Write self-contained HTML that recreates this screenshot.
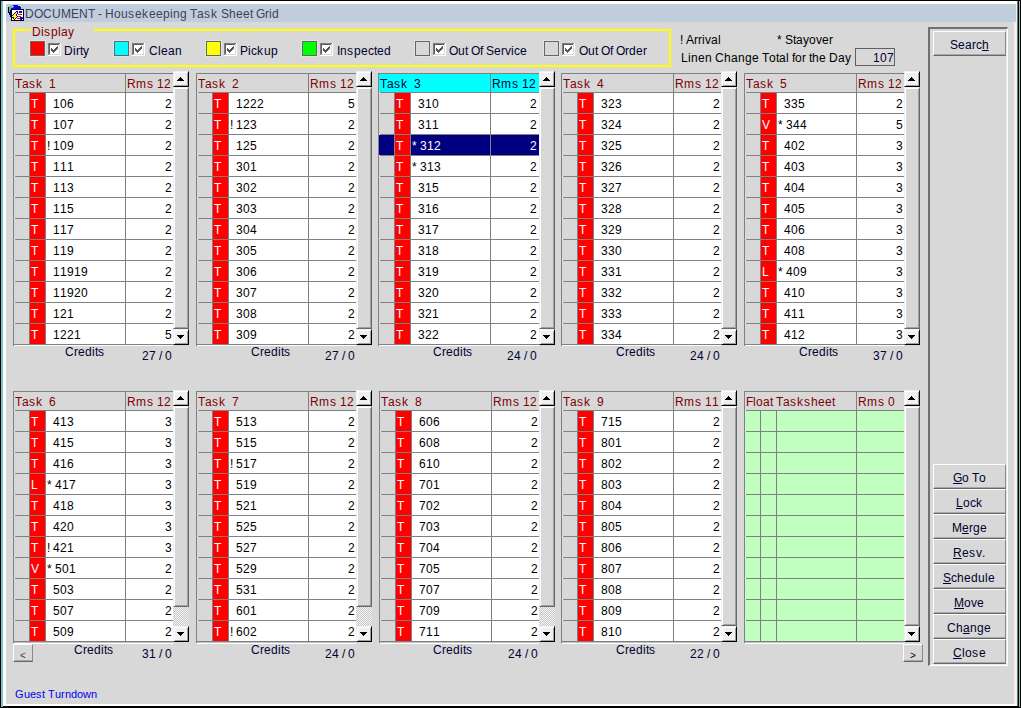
<!DOCTYPE html>
<html><head><meta charset="utf-8"><style>
html,body{margin:0;padding:0;width:1021px;height:708px;overflow:hidden;background:#000;position:relative}
body>div,body>svg{position:absolute}
.t{position:absolute;font-family:"Liberation Sans",sans-serif;font-size:12px;line-height:14px;white-space:nowrap}
.t i,.t u{font-style:normal;display:inline-block;overflow:visible}
.w0{width:0px}.w1{width:1px}.w2{width:2px}.w3{width:3px}.w4{width:4px}.w5{width:5px}.w6{width:6px}.w7{width:7px}.w8{width:8px}.w9{width:9px}.w10{width:10px}.w11{width:11px}.w12{width:12px}.w13{width:13px}.w14{width:14px}.w15{width:15px}
</style></head><body>
<div style="left:1px;top:1px;width:2px;height:706px;background:#7ec4c4"></div>
<div style="left:1019px;top:1px;width:1px;height:706px;background:#7ec4c4"></div>
<div style="left:3px;top:1px;width:1014px;height:3px;background:#fff"></div>
<div style="left:3px;top:1px;width:3px;height:705px;background:#fff"></div>
<div style="left:6px;top:4px;width:1011px;height:700px;background:#d8d8d8"></div>
<div style="left:1014px;top:4px;width:3px;height:700px;background:#f0f0f0"></div>
<div style="left:3px;top:704px;width:1014px;height:2px;background:#fff"></div>
<div style="left:1017px;top:1px;width:1px;height:705px;background:#707070"></div>
<div style="left:6px;top:4px;width:1010px;height:18px;background:#c0cedb"></div>
<div class="t" style="left:25px;top:7px;color:#404060;"><i class="w9">D</i><i class="w9">O</i><i class="w9">C</i><i class="w9">U</i><i class="w10">M</i><i class="w8">E</i><i class="w9">N</i><i class="w7">T</i><i class="w3">&nbsp;</i><i class="w4">-</i><i class="w3">&nbsp;</i><i class="w9">H</i><i class="w7">o</i><i class="w7">u</i><i class="w7">s</i><i class="w7">e</i><i class="w7">k</i><i class="w7">e</i><i class="w7">e</i><i class="w7">p</i><i class="w3">i</i><i class="w7">n</i><i class="w7">g</i><i class="w3">&nbsp;</i><i class="w7">T</i><i class="w7">a</i><i class="w7">s</i><i class="w7">k</i><i class="w3">&nbsp;</i><i class="w8">S</i><i class="w7">h</i><i class="w7">e</i><i class="w7">e</i><i class="w3">t</i><i class="w3">&nbsp;</i><i class="w9">G</i><i class="w4">r</i><i class="w3">i</i><i class="w7">d</i></div>
<div style="left:13px;top:29px;width:658px;height:38px;border:2px solid #ffff00;box-sizing:border-box"></div>
<div style="left:31px;top:24px;width:63px;height:8px;background:#d8d8d8"></div>
<div class="t" style="left:32px;top:25px;color:#800000;"><i class="w9">D</i><i class="w3">i</i><i class="w7">s</i><i class="w7">p</i><i class="w3">l</i><i class="w7">a</i><i class="w6">y</i></div>
<div style="left:30px;top:41px;width:15px;height:15px;background:#ff0000;border:1px solid #606868;box-sizing:border-box;box-shadow:0 0 0 1px #e4e4e4"></div>
<div style="left:48px;top:43px;width:13px;height:13px"><svg width="13" height="13" style="position:absolute;left:0;top:0" shape-rendering="crispEdges"><rect x="0" y="0" width="13" height="13" fill="#fff"/><rect x="0" y="0" width="12" height="1" fill="#808080"/><rect x="0" y="0" width="1" height="12" fill="#808080"/><rect x="1" y="1" width="10" height="1" fill="#585858"/><rect x="1" y="1" width="1" height="10" fill="#585858"/><rect x="1" y="11" width="11" height="1" fill="#d8d8d8"/><rect x="11" y="1" width="1" height="11" fill="#d8d8d8"/><path d="M3 5h1v1h1v1h1V6h1V5h1V4h1V3h1v3H9v1H8v1H7v1H6v1H5V9H4V8H3z" fill="#585858"/></svg></div>
<div class="t" style="left:64px;top:44px;color:#000030;"><i class="w9">D</i><i class="w3">i</i><i class="w4">r</i><i class="w3">t</i><i class="w6">y</i></div>
<div style="left:114px;top:41px;width:15px;height:15px;background:#00ffff;border:1px solid #606868;box-sizing:border-box;box-shadow:0 0 0 1px #e4e4e4"></div>
<div style="left:132px;top:43px;width:13px;height:13px"><svg width="13" height="13" style="position:absolute;left:0;top:0" shape-rendering="crispEdges"><rect x="0" y="0" width="13" height="13" fill="#fff"/><rect x="0" y="0" width="12" height="1" fill="#808080"/><rect x="0" y="0" width="1" height="12" fill="#808080"/><rect x="1" y="1" width="10" height="1" fill="#585858"/><rect x="1" y="1" width="1" height="10" fill="#585858"/><rect x="1" y="11" width="11" height="1" fill="#d8d8d8"/><rect x="11" y="1" width="1" height="11" fill="#d8d8d8"/><path d="M3 5h1v1h1v1h1V6h1V5h1V4h1V3h1v3H9v1H8v1H7v1H6v1H5V9H4V8H3z" fill="#585858"/></svg></div>
<div class="t" style="left:149px;top:44px;color:#000030;"><i class="w9">C</i><i class="w3">l</i><i class="w7">e</i><i class="w7">a</i><i class="w7">n</i></div>
<div style="left:206px;top:41px;width:15px;height:15px;background:#ffff00;border:1px solid #606868;box-sizing:border-box;box-shadow:0 0 0 1px #e4e4e4"></div>
<div style="left:224px;top:43px;width:13px;height:13px"><svg width="13" height="13" style="position:absolute;left:0;top:0" shape-rendering="crispEdges"><rect x="0" y="0" width="13" height="13" fill="#fff"/><rect x="0" y="0" width="12" height="1" fill="#808080"/><rect x="0" y="0" width="1" height="12" fill="#808080"/><rect x="1" y="1" width="10" height="1" fill="#585858"/><rect x="1" y="1" width="1" height="10" fill="#585858"/><rect x="1" y="11" width="11" height="1" fill="#d8d8d8"/><rect x="11" y="1" width="1" height="11" fill="#d8d8d8"/><path d="M3 5h1v1h1v1h1V6h1V5h1V4h1V3h1v3H9v1H8v1H7v1H6v1H5V9H4V8H3z" fill="#585858"/></svg></div>
<div class="t" style="left:240px;top:44px;color:#000030;"><i class="w8">P</i><i class="w3">i</i><i class="w6">c</i><i class="w7">k</i><i class="w7">u</i><i class="w7">p</i></div>
<div style="left:302px;top:41px;width:15px;height:15px;background:#00ff00;border:1px solid #606868;box-sizing:border-box;box-shadow:0 0 0 1px #e4e4e4"></div>
<div style="left:320px;top:43px;width:13px;height:13px"><svg width="13" height="13" style="position:absolute;left:0;top:0" shape-rendering="crispEdges"><rect x="0" y="0" width="13" height="13" fill="#fff"/><rect x="0" y="0" width="12" height="1" fill="#808080"/><rect x="0" y="0" width="1" height="12" fill="#808080"/><rect x="1" y="1" width="10" height="1" fill="#585858"/><rect x="1" y="1" width="1" height="10" fill="#585858"/><rect x="1" y="11" width="11" height="1" fill="#d8d8d8"/><rect x="11" y="1" width="1" height="11" fill="#d8d8d8"/><path d="M3 5h1v1h1v1h1V6h1V5h1V4h1V3h1v3H9v1H8v1H7v1H6v1H5V9H4V8H3z" fill="#585858"/></svg></div>
<div class="t" style="left:337px;top:44px;color:#000030;"><i class="w3">I</i><i class="w7">n</i><i class="w7">s</i><i class="w7">p</i><i class="w7">e</i><i class="w6">c</i><i class="w3">t</i><i class="w7">e</i><i class="w7">d</i></div>
<div style="left:415px;top:41px;width:15px;height:15px;background:#d8d8d8;border:1px solid #606868;box-sizing:border-box;box-shadow:0 0 0 1px #e4e4e4"></div>
<div style="left:433px;top:43px;width:13px;height:13px"><svg width="13" height="13" style="position:absolute;left:0;top:0" shape-rendering="crispEdges"><rect x="0" y="0" width="13" height="13" fill="#fff"/><rect x="0" y="0" width="12" height="1" fill="#808080"/><rect x="0" y="0" width="1" height="12" fill="#808080"/><rect x="1" y="1" width="10" height="1" fill="#585858"/><rect x="1" y="1" width="1" height="10" fill="#585858"/><rect x="1" y="11" width="11" height="1" fill="#d8d8d8"/><rect x="11" y="1" width="1" height="11" fill="#d8d8d8"/><path d="M3 5h1v1h1v1h1V6h1V5h1V4h1V3h1v3H9v1H8v1H7v1H6v1H5V9H4V8H3z" fill="#585858"/></svg></div>
<div class="t" style="left:449px;top:44px;color:#000030;"><i class="w9">O</i><i class="w7">u</i><i class="w3">t</i><i class="w3">&nbsp;</i><i class="w9">O</i><i class="w3">f</i><i class="w3">&nbsp;</i><i class="w8">S</i><i class="w7">e</i><i class="w4">r</i><i class="w6">v</i><i class="w3">i</i><i class="w6">c</i><i class="w7">e</i></div>
<div style="left:544px;top:41px;width:15px;height:15px;background:#d8d8d8;border:1px solid #606868;box-sizing:border-box;box-shadow:0 0 0 1px #e4e4e4"></div>
<div style="left:562px;top:43px;width:13px;height:13px"><svg width="13" height="13" style="position:absolute;left:0;top:0" shape-rendering="crispEdges"><rect x="0" y="0" width="13" height="13" fill="#fff"/><rect x="0" y="0" width="12" height="1" fill="#808080"/><rect x="0" y="0" width="1" height="12" fill="#808080"/><rect x="1" y="1" width="10" height="1" fill="#585858"/><rect x="1" y="1" width="1" height="10" fill="#585858"/><rect x="1" y="11" width="11" height="1" fill="#d8d8d8"/><rect x="11" y="1" width="1" height="11" fill="#d8d8d8"/><path d="M3 5h1v1h1v1h1V6h1V5h1V4h1V3h1v3H9v1H8v1H7v1H6v1H5V9H4V8H3z" fill="#585858"/></svg></div>
<div class="t" style="left:579px;top:44px;color:#000030;"><i class="w9">O</i><i class="w7">u</i><i class="w3">t</i><i class="w3">&nbsp;</i><i class="w9">O</i><i class="w3">f</i><i class="w3">&nbsp;</i><i class="w9">O</i><i class="w4">r</i><i class="w7">d</i><i class="w7">e</i><i class="w4">r</i></div>
<div class="t" style="left:680px;top:33px;color:#000;"><i class="w3">!</i><i class="w3">&nbsp;</i><i class="w8">A</i><i class="w4">r</i><i class="w4">r</i><i class="w3">i</i><i class="w6">v</i><i class="w7">a</i><i class="w3">l</i></div>
<div class="t" style="left:777px;top:33px;color:#000;"><i class="w5">*</i><i class="w3">&nbsp;</i><i class="w8">S</i><i class="w3">t</i><i class="w7">a</i><i class="w6">y</i><i class="w7">o</i><i class="w6">v</i><i class="w7">e</i><i class="w4">r</i></div>
<div class="t" style="left:681px;top:51px;color:#000;"><i class="w7">L</i><i class="w3">i</i><i class="w7">n</i><i class="w7">e</i><i class="w7">n</i><i class="w3">&nbsp;</i><i class="w9">C</i><i class="w7">h</i><i class="w7">a</i><i class="w7">n</i><i class="w7">g</i><i class="w7">e</i><i class="w3">&nbsp;</i><i class="w7">T</i><i class="w7">o</i><i class="w3">t</i><i class="w7">a</i><i class="w3">l</i><i class="w3">&nbsp;</i><i class="w3">f</i><i class="w7">o</i><i class="w4">r</i><i class="w3">&nbsp;</i><i class="w3">t</i><i class="w7">h</i><i class="w7">e</i><i class="w3">&nbsp;</i><i class="w9">D</i><i class="w7">a</i><i class="w6">y</i></div>
<div style="left:855px;top:48px;width:40px;height:18px;border:1px solid #606060;box-sizing:border-box"></div>
<div class="t" style="left:873px;top:51px;color:#000030;"><i class="w7">1</i><i class="w7">0</i><i class="w7">7</i></div>
<div style="left:13px;top:73px;width:1px;height:273px;background:#808080"></div>
<div style="left:13px;top:73px;width:160px;height:1px;background:#808080"></div>
<div style="left:14px;top:345px;width:159px;height:1px;background:#fff"></div>
<div class="t" style="left:15px;top:77px;color:#800000;"><i class="w7">T</i><i class="w7">a</i><i class="w7">s</i><i class="w7">k</i><i class="w3">&nbsp;</i><i class="w3">&nbsp;</i><i class="w7">1</i></div>
<div class="t" style="left:127px;top:77px;color:#800000;"><i class="w9">R</i><i class="w11">m</i><i class="w7">s</i><i class="w3">&nbsp;</i><i class="w7">1</i><i class="w7">2</i></div>
<div style="left:125px;top:74px;width:1px;height:271px;background:#808080"></div>
<div style="left:14px;top:92px;width:159px;height:1px;background:#808080"></div>
<div style="left:14px;top:92px;width:1px;height:1px;background:#fff"></div>
<div style="left:14px;top:93px;width:15px;height:20px;background:#d8d8d8"></div>
<div style="left:29px;top:93px;width:1px;height:20px;background:#808080"></div>
<div style="left:30px;top:93px;width:15px;height:20px;background:#ff0000"></div>
<div style="left:45px;top:93px;width:1px;height:20px;background:#808080"></div>
<div style="left:46px;top:93px;width:79px;height:20px;background:#fff"></div>
<div style="left:126px;top:93px;width:47px;height:20px;background:#fff"></div>
<div class="t" style="left:31px;top:97px;color:#fff;"><i class="w7">T</i></div>
<div class="t" style="left:47px;top:97px;color:#000;"><i class="w3">&nbsp;</i><i class="w3">&nbsp;</i><i class="w7">1</i><i class="w7">0</i><i class="w7">6</i></div>
<div class="t" style="left:165px;top:97px;color:#000;"><i class="w7">2</i></div>
<div style="left:14px;top:113px;width:159px;height:1px;background:#808080"></div>
<div style="left:14px;top:113px;width:1px;height:1px;background:#fff"></div>
<div style="left:14px;top:114px;width:15px;height:20px;background:#d8d8d8"></div>
<div style="left:29px;top:114px;width:1px;height:20px;background:#808080"></div>
<div style="left:30px;top:114px;width:15px;height:20px;background:#ff0000"></div>
<div style="left:45px;top:114px;width:1px;height:20px;background:#808080"></div>
<div style="left:46px;top:114px;width:79px;height:20px;background:#fff"></div>
<div style="left:126px;top:114px;width:47px;height:20px;background:#fff"></div>
<div class="t" style="left:31px;top:118px;color:#fff;"><i class="w7">T</i></div>
<div class="t" style="left:47px;top:118px;color:#000;"><i class="w3">&nbsp;</i><i class="w3">&nbsp;</i><i class="w7">1</i><i class="w7">0</i><i class="w7">7</i></div>
<div class="t" style="left:165px;top:118px;color:#000;"><i class="w7">2</i></div>
<div style="left:14px;top:134px;width:159px;height:1px;background:#808080"></div>
<div style="left:14px;top:134px;width:1px;height:1px;background:#fff"></div>
<div style="left:14px;top:135px;width:15px;height:20px;background:#d8d8d8"></div>
<div style="left:29px;top:135px;width:1px;height:20px;background:#808080"></div>
<div style="left:30px;top:135px;width:15px;height:20px;background:#ff0000"></div>
<div style="left:45px;top:135px;width:1px;height:20px;background:#808080"></div>
<div style="left:46px;top:135px;width:79px;height:20px;background:#fff"></div>
<div style="left:126px;top:135px;width:47px;height:20px;background:#fff"></div>
<div class="t" style="left:31px;top:139px;color:#fff;"><i class="w7">T</i></div>
<div class="t" style="left:47px;top:139px;color:#000;"><i class="w3">!</i><i class="w3">&nbsp;</i><i class="w7">1</i><i class="w7">0</i><i class="w7">9</i></div>
<div class="t" style="left:165px;top:139px;color:#000;"><i class="w7">2</i></div>
<div style="left:14px;top:155px;width:159px;height:1px;background:#808080"></div>
<div style="left:14px;top:155px;width:1px;height:1px;background:#fff"></div>
<div style="left:14px;top:156px;width:15px;height:20px;background:#d8d8d8"></div>
<div style="left:29px;top:156px;width:1px;height:20px;background:#808080"></div>
<div style="left:30px;top:156px;width:15px;height:20px;background:#ff0000"></div>
<div style="left:45px;top:156px;width:1px;height:20px;background:#808080"></div>
<div style="left:46px;top:156px;width:79px;height:20px;background:#fff"></div>
<div style="left:126px;top:156px;width:47px;height:20px;background:#fff"></div>
<div class="t" style="left:31px;top:160px;color:#fff;"><i class="w7">T</i></div>
<div class="t" style="left:47px;top:160px;color:#000;"><i class="w3">&nbsp;</i><i class="w3">&nbsp;</i><i class="w7">1</i><i class="w7">1</i><i class="w7">1</i></div>
<div class="t" style="left:165px;top:160px;color:#000;"><i class="w7">2</i></div>
<div style="left:14px;top:176px;width:159px;height:1px;background:#808080"></div>
<div style="left:14px;top:176px;width:1px;height:1px;background:#fff"></div>
<div style="left:14px;top:177px;width:15px;height:20px;background:#d8d8d8"></div>
<div style="left:29px;top:177px;width:1px;height:20px;background:#808080"></div>
<div style="left:30px;top:177px;width:15px;height:20px;background:#ff0000"></div>
<div style="left:45px;top:177px;width:1px;height:20px;background:#808080"></div>
<div style="left:46px;top:177px;width:79px;height:20px;background:#fff"></div>
<div style="left:126px;top:177px;width:47px;height:20px;background:#fff"></div>
<div class="t" style="left:31px;top:181px;color:#fff;"><i class="w7">T</i></div>
<div class="t" style="left:47px;top:181px;color:#000;"><i class="w3">&nbsp;</i><i class="w3">&nbsp;</i><i class="w7">1</i><i class="w7">1</i><i class="w7">3</i></div>
<div class="t" style="left:165px;top:181px;color:#000;"><i class="w7">2</i></div>
<div style="left:14px;top:197px;width:159px;height:1px;background:#808080"></div>
<div style="left:14px;top:197px;width:1px;height:1px;background:#fff"></div>
<div style="left:14px;top:198px;width:15px;height:20px;background:#d8d8d8"></div>
<div style="left:29px;top:198px;width:1px;height:20px;background:#808080"></div>
<div style="left:30px;top:198px;width:15px;height:20px;background:#ff0000"></div>
<div style="left:45px;top:198px;width:1px;height:20px;background:#808080"></div>
<div style="left:46px;top:198px;width:79px;height:20px;background:#fff"></div>
<div style="left:126px;top:198px;width:47px;height:20px;background:#fff"></div>
<div class="t" style="left:31px;top:202px;color:#fff;"><i class="w7">T</i></div>
<div class="t" style="left:47px;top:202px;color:#000;"><i class="w3">&nbsp;</i><i class="w3">&nbsp;</i><i class="w7">1</i><i class="w7">1</i><i class="w7">5</i></div>
<div class="t" style="left:165px;top:202px;color:#000;"><i class="w7">2</i></div>
<div style="left:14px;top:218px;width:159px;height:1px;background:#808080"></div>
<div style="left:14px;top:218px;width:1px;height:1px;background:#fff"></div>
<div style="left:14px;top:219px;width:15px;height:20px;background:#d8d8d8"></div>
<div style="left:29px;top:219px;width:1px;height:20px;background:#808080"></div>
<div style="left:30px;top:219px;width:15px;height:20px;background:#ff0000"></div>
<div style="left:45px;top:219px;width:1px;height:20px;background:#808080"></div>
<div style="left:46px;top:219px;width:79px;height:20px;background:#fff"></div>
<div style="left:126px;top:219px;width:47px;height:20px;background:#fff"></div>
<div class="t" style="left:31px;top:223px;color:#fff;"><i class="w7">T</i></div>
<div class="t" style="left:47px;top:223px;color:#000;"><i class="w3">&nbsp;</i><i class="w3">&nbsp;</i><i class="w7">1</i><i class="w7">1</i><i class="w7">7</i></div>
<div class="t" style="left:165px;top:223px;color:#000;"><i class="w7">2</i></div>
<div style="left:14px;top:239px;width:159px;height:1px;background:#808080"></div>
<div style="left:14px;top:239px;width:1px;height:1px;background:#fff"></div>
<div style="left:14px;top:240px;width:15px;height:20px;background:#d8d8d8"></div>
<div style="left:29px;top:240px;width:1px;height:20px;background:#808080"></div>
<div style="left:30px;top:240px;width:15px;height:20px;background:#ff0000"></div>
<div style="left:45px;top:240px;width:1px;height:20px;background:#808080"></div>
<div style="left:46px;top:240px;width:79px;height:20px;background:#fff"></div>
<div style="left:126px;top:240px;width:47px;height:20px;background:#fff"></div>
<div class="t" style="left:31px;top:244px;color:#fff;"><i class="w7">T</i></div>
<div class="t" style="left:47px;top:244px;color:#000;"><i class="w3">&nbsp;</i><i class="w3">&nbsp;</i><i class="w7">1</i><i class="w7">1</i><i class="w7">9</i></div>
<div class="t" style="left:165px;top:244px;color:#000;"><i class="w7">2</i></div>
<div style="left:14px;top:260px;width:159px;height:1px;background:#808080"></div>
<div style="left:14px;top:260px;width:1px;height:1px;background:#fff"></div>
<div style="left:14px;top:261px;width:15px;height:20px;background:#d8d8d8"></div>
<div style="left:29px;top:261px;width:1px;height:20px;background:#808080"></div>
<div style="left:30px;top:261px;width:15px;height:20px;background:#ff0000"></div>
<div style="left:45px;top:261px;width:1px;height:20px;background:#808080"></div>
<div style="left:46px;top:261px;width:79px;height:20px;background:#fff"></div>
<div style="left:126px;top:261px;width:47px;height:20px;background:#fff"></div>
<div class="t" style="left:31px;top:265px;color:#fff;"><i class="w7">T</i></div>
<div class="t" style="left:47px;top:265px;color:#000;"><i class="w3">&nbsp;</i><i class="w3">&nbsp;</i><i class="w7">1</i><i class="w7">1</i><i class="w7">9</i><i class="w7">1</i><i class="w7">9</i></div>
<div class="t" style="left:165px;top:265px;color:#000;"><i class="w7">2</i></div>
<div style="left:14px;top:281px;width:159px;height:1px;background:#808080"></div>
<div style="left:14px;top:281px;width:1px;height:1px;background:#fff"></div>
<div style="left:14px;top:282px;width:15px;height:20px;background:#d8d8d8"></div>
<div style="left:29px;top:282px;width:1px;height:20px;background:#808080"></div>
<div style="left:30px;top:282px;width:15px;height:20px;background:#ff0000"></div>
<div style="left:45px;top:282px;width:1px;height:20px;background:#808080"></div>
<div style="left:46px;top:282px;width:79px;height:20px;background:#fff"></div>
<div style="left:126px;top:282px;width:47px;height:20px;background:#fff"></div>
<div class="t" style="left:31px;top:286px;color:#fff;"><i class="w7">T</i></div>
<div class="t" style="left:47px;top:286px;color:#000;"><i class="w3">&nbsp;</i><i class="w3">&nbsp;</i><i class="w7">1</i><i class="w7">1</i><i class="w7">9</i><i class="w7">2</i><i class="w7">0</i></div>
<div class="t" style="left:165px;top:286px;color:#000;"><i class="w7">2</i></div>
<div style="left:14px;top:302px;width:159px;height:1px;background:#808080"></div>
<div style="left:14px;top:302px;width:1px;height:1px;background:#fff"></div>
<div style="left:14px;top:303px;width:15px;height:20px;background:#d8d8d8"></div>
<div style="left:29px;top:303px;width:1px;height:20px;background:#808080"></div>
<div style="left:30px;top:303px;width:15px;height:20px;background:#ff0000"></div>
<div style="left:45px;top:303px;width:1px;height:20px;background:#808080"></div>
<div style="left:46px;top:303px;width:79px;height:20px;background:#fff"></div>
<div style="left:126px;top:303px;width:47px;height:20px;background:#fff"></div>
<div class="t" style="left:31px;top:307px;color:#fff;"><i class="w7">T</i></div>
<div class="t" style="left:47px;top:307px;color:#000;"><i class="w3">&nbsp;</i><i class="w3">&nbsp;</i><i class="w7">1</i><i class="w7">2</i><i class="w7">1</i></div>
<div class="t" style="left:165px;top:307px;color:#000;"><i class="w7">2</i></div>
<div style="left:14px;top:323px;width:159px;height:1px;background:#808080"></div>
<div style="left:14px;top:323px;width:1px;height:1px;background:#fff"></div>
<div style="left:14px;top:324px;width:15px;height:20px;background:#d8d8d8"></div>
<div style="left:29px;top:324px;width:1px;height:20px;background:#808080"></div>
<div style="left:30px;top:324px;width:15px;height:20px;background:#ff0000"></div>
<div style="left:45px;top:324px;width:1px;height:20px;background:#808080"></div>
<div style="left:46px;top:324px;width:79px;height:20px;background:#fff"></div>
<div style="left:126px;top:324px;width:47px;height:20px;background:#fff"></div>
<div class="t" style="left:31px;top:328px;color:#fff;"><i class="w7">T</i></div>
<div class="t" style="left:47px;top:328px;color:#000;"><i class="w3">&nbsp;</i><i class="w3">&nbsp;</i><i class="w7">1</i><i class="w7">2</i><i class="w7">2</i><i class="w7">1</i></div>
<div class="t" style="left:165px;top:328px;color:#000;"><i class="w7">5</i></div>
<div style="left:14px;top:344px;width:159px;height:1px;background:#808080"></div>
<div class="t" style="left:65px;top:345px;color:#000030;"><i class="w9">C</i><i class="w4">r</i><i class="w7">e</i><i class="w7">d</i><i class="w3">i</i><i class="w3">t</i><i class="w7">s</i></div>
<div class="t" style="left:142px;top:349px;color:#000030;"><i class="w7">2</i><i class="w7">7</i><i class="w3">&nbsp;</i><i class="w3">/</i><i class="w3">&nbsp;</i><i class="w7">0</i></div>
<div style="left:173px;top:71px;width:16px;height:16px;background:#f0f0f0;border:1px solid;border-color:#f0f0f0 #000 #000 #f0f0f0;box-shadow:inset 1px 1px #fff,inset -1px -1px #a0a0a0;box-sizing:border-box"></div>
<svg style="position:absolute;left:177px;top:77px" width="7" height="4" shape-rendering="crispEdges"><path d="M3 0h1v1h1v1h1v1h1v1H0V3h1V2h1V1h1z" fill="#000"/></svg>
<div style="left:173px;top:87px;width:16px;height:242px;background:#d8d8d8;border:1px solid;border-color:#f0f0f0 #696969 #696969 #f0f0f0;box-shadow:inset 1px 1px #fff,inset -1px -1px #a0a0a0;box-sizing:border-box"></div>
<div style="left:173px;top:329px;width:16px;height:16px;background:#f0f0f0;border:1px solid;border-color:#f0f0f0 #000 #000 #f0f0f0;box-shadow:inset 1px 1px #fff,inset -1px -1px #a0a0a0;box-sizing:border-box"></div>
<svg style="position:absolute;left:177px;top:335px" width="7" height="4" shape-rendering="crispEdges"><path d="M0 0h7v1H6v1H5v1H4v1H3V3H2V2H1V1H0z" fill="#000"/></svg>
<div style="left:196px;top:73px;width:1px;height:273px;background:#808080"></div>
<div style="left:196px;top:73px;width:160px;height:1px;background:#808080"></div>
<div style="left:197px;top:345px;width:159px;height:1px;background:#fff"></div>
<div class="t" style="left:198px;top:77px;color:#800000;"><i class="w7">T</i><i class="w7">a</i><i class="w7">s</i><i class="w7">k</i><i class="w3">&nbsp;</i><i class="w3">&nbsp;</i><i class="w7">2</i></div>
<div class="t" style="left:310px;top:77px;color:#800000;"><i class="w9">R</i><i class="w11">m</i><i class="w7">s</i><i class="w3">&nbsp;</i><i class="w7">1</i><i class="w7">2</i></div>
<div style="left:308px;top:74px;width:1px;height:271px;background:#808080"></div>
<div style="left:197px;top:92px;width:159px;height:1px;background:#808080"></div>
<div style="left:197px;top:92px;width:1px;height:1px;background:#fff"></div>
<div style="left:197px;top:93px;width:15px;height:20px;background:#d8d8d8"></div>
<div style="left:212px;top:93px;width:1px;height:20px;background:#808080"></div>
<div style="left:213px;top:93px;width:15px;height:20px;background:#ff0000"></div>
<div style="left:228px;top:93px;width:1px;height:20px;background:#808080"></div>
<div style="left:229px;top:93px;width:79px;height:20px;background:#fff"></div>
<div style="left:309px;top:93px;width:47px;height:20px;background:#fff"></div>
<div class="t" style="left:214px;top:97px;color:#fff;"><i class="w7">T</i></div>
<div class="t" style="left:230px;top:97px;color:#000;"><i class="w3">&nbsp;</i><i class="w3">&nbsp;</i><i class="w7">1</i><i class="w7">2</i><i class="w7">2</i><i class="w7">2</i></div>
<div class="t" style="left:348px;top:97px;color:#000;"><i class="w7">5</i></div>
<div style="left:197px;top:113px;width:159px;height:1px;background:#808080"></div>
<div style="left:197px;top:113px;width:1px;height:1px;background:#fff"></div>
<div style="left:197px;top:114px;width:15px;height:20px;background:#d8d8d8"></div>
<div style="left:212px;top:114px;width:1px;height:20px;background:#808080"></div>
<div style="left:213px;top:114px;width:15px;height:20px;background:#ff0000"></div>
<div style="left:228px;top:114px;width:1px;height:20px;background:#808080"></div>
<div style="left:229px;top:114px;width:79px;height:20px;background:#fff"></div>
<div style="left:309px;top:114px;width:47px;height:20px;background:#fff"></div>
<div class="t" style="left:214px;top:118px;color:#fff;"><i class="w7">T</i></div>
<div class="t" style="left:230px;top:118px;color:#000;"><i class="w3">!</i><i class="w3">&nbsp;</i><i class="w7">1</i><i class="w7">2</i><i class="w7">3</i></div>
<div class="t" style="left:348px;top:118px;color:#000;"><i class="w7">2</i></div>
<div style="left:197px;top:134px;width:159px;height:1px;background:#808080"></div>
<div style="left:197px;top:134px;width:1px;height:1px;background:#fff"></div>
<div style="left:197px;top:135px;width:15px;height:20px;background:#d8d8d8"></div>
<div style="left:212px;top:135px;width:1px;height:20px;background:#808080"></div>
<div style="left:213px;top:135px;width:15px;height:20px;background:#ff0000"></div>
<div style="left:228px;top:135px;width:1px;height:20px;background:#808080"></div>
<div style="left:229px;top:135px;width:79px;height:20px;background:#fff"></div>
<div style="left:309px;top:135px;width:47px;height:20px;background:#fff"></div>
<div class="t" style="left:214px;top:139px;color:#fff;"><i class="w7">T</i></div>
<div class="t" style="left:230px;top:139px;color:#000;"><i class="w3">&nbsp;</i><i class="w3">&nbsp;</i><i class="w7">1</i><i class="w7">2</i><i class="w7">5</i></div>
<div class="t" style="left:348px;top:139px;color:#000;"><i class="w7">2</i></div>
<div style="left:197px;top:155px;width:159px;height:1px;background:#808080"></div>
<div style="left:197px;top:155px;width:1px;height:1px;background:#fff"></div>
<div style="left:197px;top:156px;width:15px;height:20px;background:#d8d8d8"></div>
<div style="left:212px;top:156px;width:1px;height:20px;background:#808080"></div>
<div style="left:213px;top:156px;width:15px;height:20px;background:#ff0000"></div>
<div style="left:228px;top:156px;width:1px;height:20px;background:#808080"></div>
<div style="left:229px;top:156px;width:79px;height:20px;background:#fff"></div>
<div style="left:309px;top:156px;width:47px;height:20px;background:#fff"></div>
<div class="t" style="left:214px;top:160px;color:#fff;"><i class="w7">T</i></div>
<div class="t" style="left:230px;top:160px;color:#000;"><i class="w3">&nbsp;</i><i class="w3">&nbsp;</i><i class="w7">3</i><i class="w7">0</i><i class="w7">1</i></div>
<div class="t" style="left:348px;top:160px;color:#000;"><i class="w7">2</i></div>
<div style="left:197px;top:176px;width:159px;height:1px;background:#808080"></div>
<div style="left:197px;top:176px;width:1px;height:1px;background:#fff"></div>
<div style="left:197px;top:177px;width:15px;height:20px;background:#d8d8d8"></div>
<div style="left:212px;top:177px;width:1px;height:20px;background:#808080"></div>
<div style="left:213px;top:177px;width:15px;height:20px;background:#ff0000"></div>
<div style="left:228px;top:177px;width:1px;height:20px;background:#808080"></div>
<div style="left:229px;top:177px;width:79px;height:20px;background:#fff"></div>
<div style="left:309px;top:177px;width:47px;height:20px;background:#fff"></div>
<div class="t" style="left:214px;top:181px;color:#fff;"><i class="w7">T</i></div>
<div class="t" style="left:230px;top:181px;color:#000;"><i class="w3">&nbsp;</i><i class="w3">&nbsp;</i><i class="w7">3</i><i class="w7">0</i><i class="w7">2</i></div>
<div class="t" style="left:348px;top:181px;color:#000;"><i class="w7">2</i></div>
<div style="left:197px;top:197px;width:159px;height:1px;background:#808080"></div>
<div style="left:197px;top:197px;width:1px;height:1px;background:#fff"></div>
<div style="left:197px;top:198px;width:15px;height:20px;background:#d8d8d8"></div>
<div style="left:212px;top:198px;width:1px;height:20px;background:#808080"></div>
<div style="left:213px;top:198px;width:15px;height:20px;background:#ff0000"></div>
<div style="left:228px;top:198px;width:1px;height:20px;background:#808080"></div>
<div style="left:229px;top:198px;width:79px;height:20px;background:#fff"></div>
<div style="left:309px;top:198px;width:47px;height:20px;background:#fff"></div>
<div class="t" style="left:214px;top:202px;color:#fff;"><i class="w7">T</i></div>
<div class="t" style="left:230px;top:202px;color:#000;"><i class="w3">&nbsp;</i><i class="w3">&nbsp;</i><i class="w7">3</i><i class="w7">0</i><i class="w7">3</i></div>
<div class="t" style="left:348px;top:202px;color:#000;"><i class="w7">2</i></div>
<div style="left:197px;top:218px;width:159px;height:1px;background:#808080"></div>
<div style="left:197px;top:218px;width:1px;height:1px;background:#fff"></div>
<div style="left:197px;top:219px;width:15px;height:20px;background:#d8d8d8"></div>
<div style="left:212px;top:219px;width:1px;height:20px;background:#808080"></div>
<div style="left:213px;top:219px;width:15px;height:20px;background:#ff0000"></div>
<div style="left:228px;top:219px;width:1px;height:20px;background:#808080"></div>
<div style="left:229px;top:219px;width:79px;height:20px;background:#fff"></div>
<div style="left:309px;top:219px;width:47px;height:20px;background:#fff"></div>
<div class="t" style="left:214px;top:223px;color:#fff;"><i class="w7">T</i></div>
<div class="t" style="left:230px;top:223px;color:#000;"><i class="w3">&nbsp;</i><i class="w3">&nbsp;</i><i class="w7">3</i><i class="w7">0</i><i class="w7">4</i></div>
<div class="t" style="left:348px;top:223px;color:#000;"><i class="w7">2</i></div>
<div style="left:197px;top:239px;width:159px;height:1px;background:#808080"></div>
<div style="left:197px;top:239px;width:1px;height:1px;background:#fff"></div>
<div style="left:197px;top:240px;width:15px;height:20px;background:#d8d8d8"></div>
<div style="left:212px;top:240px;width:1px;height:20px;background:#808080"></div>
<div style="left:213px;top:240px;width:15px;height:20px;background:#ff0000"></div>
<div style="left:228px;top:240px;width:1px;height:20px;background:#808080"></div>
<div style="left:229px;top:240px;width:79px;height:20px;background:#fff"></div>
<div style="left:309px;top:240px;width:47px;height:20px;background:#fff"></div>
<div class="t" style="left:214px;top:244px;color:#fff;"><i class="w7">T</i></div>
<div class="t" style="left:230px;top:244px;color:#000;"><i class="w3">&nbsp;</i><i class="w3">&nbsp;</i><i class="w7">3</i><i class="w7">0</i><i class="w7">5</i></div>
<div class="t" style="left:348px;top:244px;color:#000;"><i class="w7">2</i></div>
<div style="left:197px;top:260px;width:159px;height:1px;background:#808080"></div>
<div style="left:197px;top:260px;width:1px;height:1px;background:#fff"></div>
<div style="left:197px;top:261px;width:15px;height:20px;background:#d8d8d8"></div>
<div style="left:212px;top:261px;width:1px;height:20px;background:#808080"></div>
<div style="left:213px;top:261px;width:15px;height:20px;background:#ff0000"></div>
<div style="left:228px;top:261px;width:1px;height:20px;background:#808080"></div>
<div style="left:229px;top:261px;width:79px;height:20px;background:#fff"></div>
<div style="left:309px;top:261px;width:47px;height:20px;background:#fff"></div>
<div class="t" style="left:214px;top:265px;color:#fff;"><i class="w7">T</i></div>
<div class="t" style="left:230px;top:265px;color:#000;"><i class="w3">&nbsp;</i><i class="w3">&nbsp;</i><i class="w7">3</i><i class="w7">0</i><i class="w7">6</i></div>
<div class="t" style="left:348px;top:265px;color:#000;"><i class="w7">2</i></div>
<div style="left:197px;top:281px;width:159px;height:1px;background:#808080"></div>
<div style="left:197px;top:281px;width:1px;height:1px;background:#fff"></div>
<div style="left:197px;top:282px;width:15px;height:20px;background:#d8d8d8"></div>
<div style="left:212px;top:282px;width:1px;height:20px;background:#808080"></div>
<div style="left:213px;top:282px;width:15px;height:20px;background:#ff0000"></div>
<div style="left:228px;top:282px;width:1px;height:20px;background:#808080"></div>
<div style="left:229px;top:282px;width:79px;height:20px;background:#fff"></div>
<div style="left:309px;top:282px;width:47px;height:20px;background:#fff"></div>
<div class="t" style="left:214px;top:286px;color:#fff;"><i class="w7">T</i></div>
<div class="t" style="left:230px;top:286px;color:#000;"><i class="w3">&nbsp;</i><i class="w3">&nbsp;</i><i class="w7">3</i><i class="w7">0</i><i class="w7">7</i></div>
<div class="t" style="left:348px;top:286px;color:#000;"><i class="w7">2</i></div>
<div style="left:197px;top:302px;width:159px;height:1px;background:#808080"></div>
<div style="left:197px;top:302px;width:1px;height:1px;background:#fff"></div>
<div style="left:197px;top:303px;width:15px;height:20px;background:#d8d8d8"></div>
<div style="left:212px;top:303px;width:1px;height:20px;background:#808080"></div>
<div style="left:213px;top:303px;width:15px;height:20px;background:#ff0000"></div>
<div style="left:228px;top:303px;width:1px;height:20px;background:#808080"></div>
<div style="left:229px;top:303px;width:79px;height:20px;background:#fff"></div>
<div style="left:309px;top:303px;width:47px;height:20px;background:#fff"></div>
<div class="t" style="left:214px;top:307px;color:#fff;"><i class="w7">T</i></div>
<div class="t" style="left:230px;top:307px;color:#000;"><i class="w3">&nbsp;</i><i class="w3">&nbsp;</i><i class="w7">3</i><i class="w7">0</i><i class="w7">8</i></div>
<div class="t" style="left:348px;top:307px;color:#000;"><i class="w7">2</i></div>
<div style="left:197px;top:323px;width:159px;height:1px;background:#808080"></div>
<div style="left:197px;top:323px;width:1px;height:1px;background:#fff"></div>
<div style="left:197px;top:324px;width:15px;height:20px;background:#d8d8d8"></div>
<div style="left:212px;top:324px;width:1px;height:20px;background:#808080"></div>
<div style="left:213px;top:324px;width:15px;height:20px;background:#ff0000"></div>
<div style="left:228px;top:324px;width:1px;height:20px;background:#808080"></div>
<div style="left:229px;top:324px;width:79px;height:20px;background:#fff"></div>
<div style="left:309px;top:324px;width:47px;height:20px;background:#fff"></div>
<div class="t" style="left:214px;top:328px;color:#fff;"><i class="w7">T</i></div>
<div class="t" style="left:230px;top:328px;color:#000;"><i class="w3">&nbsp;</i><i class="w3">&nbsp;</i><i class="w7">3</i><i class="w7">0</i><i class="w7">9</i></div>
<div class="t" style="left:348px;top:328px;color:#000;"><i class="w7">2</i></div>
<div style="left:197px;top:344px;width:159px;height:1px;background:#808080"></div>
<div class="t" style="left:251px;top:345px;color:#000030;"><i class="w9">C</i><i class="w4">r</i><i class="w7">e</i><i class="w7">d</i><i class="w3">i</i><i class="w3">t</i><i class="w7">s</i></div>
<div class="t" style="left:325px;top:349px;color:#000030;"><i class="w7">2</i><i class="w7">7</i><i class="w3">&nbsp;</i><i class="w3">/</i><i class="w3">&nbsp;</i><i class="w7">0</i></div>
<div style="left:356px;top:71px;width:16px;height:16px;background:#f0f0f0;border:1px solid;border-color:#f0f0f0 #000 #000 #f0f0f0;box-shadow:inset 1px 1px #fff,inset -1px -1px #a0a0a0;box-sizing:border-box"></div>
<svg style="position:absolute;left:360px;top:77px" width="7" height="4" shape-rendering="crispEdges"><path d="M3 0h1v1h1v1h1v1h1v1H0V3h1V2h1V1h1z" fill="#000"/></svg>
<div style="left:356px;top:87px;width:16px;height:242px;background:#d8d8d8;border:1px solid;border-color:#f0f0f0 #696969 #696969 #f0f0f0;box-shadow:inset 1px 1px #fff,inset -1px -1px #a0a0a0;box-sizing:border-box"></div>
<div style="left:356px;top:329px;width:16px;height:16px;background:#f0f0f0;border:1px solid;border-color:#f0f0f0 #000 #000 #f0f0f0;box-shadow:inset 1px 1px #fff,inset -1px -1px #a0a0a0;box-sizing:border-box"></div>
<svg style="position:absolute;left:360px;top:335px" width="7" height="4" shape-rendering="crispEdges"><path d="M0 0h7v1H6v1H5v1H4v1H3V3H2V2H1V1H0z" fill="#000"/></svg>
<div style="left:378px;top:73px;width:1px;height:273px;background:#808080"></div>
<div style="left:378px;top:73px;width:161px;height:1px;background:#808080"></div>
<div style="left:379px;top:345px;width:160px;height:1px;background:#fff"></div>
<div style="left:379px;top:74px;width:160px;height:18px;background:#00ffff"></div>
<div class="t" style="left:380px;top:77px;color:#000040;"><i class="w7">T</i><i class="w7">a</i><i class="w7">s</i><i class="w7">k</i><i class="w3">&nbsp;</i><i class="w3">&nbsp;</i><i class="w7">3</i></div>
<div class="t" style="left:492px;top:77px;color:#000040;"><i class="w9">R</i><i class="w11">m</i><i class="w7">s</i><i class="w3">&nbsp;</i><i class="w7">1</i><i class="w7">2</i></div>
<div style="left:490px;top:74px;width:1px;height:271px;background:#808080"></div>
<div style="left:379px;top:92px;width:160px;height:1px;background:#808080"></div>
<div style="left:379px;top:92px;width:1px;height:1px;background:#fff"></div>
<div style="left:379px;top:93px;width:15px;height:20px;background:#d8d8d8"></div>
<div style="left:394px;top:93px;width:1px;height:20px;background:#808080"></div>
<div style="left:395px;top:93px;width:15px;height:20px;background:#ff0000"></div>
<div style="left:410px;top:93px;width:1px;height:20px;background:#808080"></div>
<div style="left:411px;top:93px;width:79px;height:20px;background:#fff"></div>
<div style="left:491px;top:93px;width:48px;height:20px;background:#fff"></div>
<div class="t" style="left:396px;top:97px;color:#fff;"><i class="w7">T</i></div>
<div class="t" style="left:412px;top:97px;color:#000;"><i class="w3">&nbsp;</i><i class="w3">&nbsp;</i><i class="w7">3</i><i class="w7">1</i><i class="w7">0</i></div>
<div class="t" style="left:530px;top:97px;color:#000;"><i class="w7">2</i></div>
<div style="left:379px;top:113px;width:160px;height:1px;background:#808080"></div>
<div style="left:379px;top:113px;width:1px;height:1px;background:#fff"></div>
<div style="left:379px;top:114px;width:15px;height:20px;background:#d8d8d8"></div>
<div style="left:394px;top:114px;width:1px;height:20px;background:#808080"></div>
<div style="left:395px;top:114px;width:15px;height:20px;background:#ff0000"></div>
<div style="left:410px;top:114px;width:1px;height:20px;background:#808080"></div>
<div style="left:411px;top:114px;width:79px;height:20px;background:#fff"></div>
<div style="left:491px;top:114px;width:48px;height:20px;background:#fff"></div>
<div class="t" style="left:396px;top:118px;color:#fff;"><i class="w7">T</i></div>
<div class="t" style="left:412px;top:118px;color:#000;"><i class="w3">&nbsp;</i><i class="w3">&nbsp;</i><i class="w7">3</i><i class="w7">1</i><i class="w7">1</i></div>
<div class="t" style="left:530px;top:118px;color:#000;"><i class="w7">2</i></div>
<div style="left:379px;top:134px;width:160px;height:1px;background:#808080"></div>
<div style="left:379px;top:134px;width:1px;height:1px;background:#fff"></div>
<div style="left:379px;top:135px;width:15px;height:20px;background:#000080"></div>
<div style="left:394px;top:135px;width:1px;height:20px;background:#808080"></div>
<div style="left:395px;top:135px;width:15px;height:20px;background:#ff0000"></div>
<div style="left:410px;top:135px;width:1px;height:20px;background:#808080"></div>
<div style="left:411px;top:135px;width:79px;height:20px;background:#000080"></div>
<div style="left:491px;top:135px;width:48px;height:20px;background:#000080"></div>
<div class="t" style="left:396px;top:139px;color:#fff;"><i class="w7">T</i></div>
<div class="t" style="left:412px;top:139px;color:#fff;"><i class="w5">*</i><i class="w3">&nbsp;</i><i class="w7">3</i><i class="w7">1</i><i class="w7">2</i></div>
<div class="t" style="left:530px;top:139px;color:#fff;"><i class="w7">2</i></div>
<div style="left:379px;top:155px;width:160px;height:1px;background:#808080"></div>
<div style="left:379px;top:155px;width:1px;height:1px;background:#fff"></div>
<div style="left:379px;top:156px;width:15px;height:20px;background:#d8d8d8"></div>
<div style="left:394px;top:156px;width:1px;height:20px;background:#808080"></div>
<div style="left:395px;top:156px;width:15px;height:20px;background:#ff0000"></div>
<div style="left:410px;top:156px;width:1px;height:20px;background:#808080"></div>
<div style="left:411px;top:156px;width:79px;height:20px;background:#fff"></div>
<div style="left:491px;top:156px;width:48px;height:20px;background:#fff"></div>
<div class="t" style="left:396px;top:160px;color:#fff;"><i class="w7">T</i></div>
<div class="t" style="left:412px;top:160px;color:#000;"><i class="w5">*</i><i class="w3">&nbsp;</i><i class="w7">3</i><i class="w7">1</i><i class="w7">3</i></div>
<div class="t" style="left:530px;top:160px;color:#000;"><i class="w7">2</i></div>
<div style="left:379px;top:176px;width:160px;height:1px;background:#808080"></div>
<div style="left:379px;top:176px;width:1px;height:1px;background:#fff"></div>
<div style="left:379px;top:177px;width:15px;height:20px;background:#d8d8d8"></div>
<div style="left:394px;top:177px;width:1px;height:20px;background:#808080"></div>
<div style="left:395px;top:177px;width:15px;height:20px;background:#ff0000"></div>
<div style="left:410px;top:177px;width:1px;height:20px;background:#808080"></div>
<div style="left:411px;top:177px;width:79px;height:20px;background:#fff"></div>
<div style="left:491px;top:177px;width:48px;height:20px;background:#fff"></div>
<div class="t" style="left:396px;top:181px;color:#fff;"><i class="w7">T</i></div>
<div class="t" style="left:412px;top:181px;color:#000;"><i class="w3">&nbsp;</i><i class="w3">&nbsp;</i><i class="w7">3</i><i class="w7">1</i><i class="w7">5</i></div>
<div class="t" style="left:530px;top:181px;color:#000;"><i class="w7">2</i></div>
<div style="left:379px;top:197px;width:160px;height:1px;background:#808080"></div>
<div style="left:379px;top:197px;width:1px;height:1px;background:#fff"></div>
<div style="left:379px;top:198px;width:15px;height:20px;background:#d8d8d8"></div>
<div style="left:394px;top:198px;width:1px;height:20px;background:#808080"></div>
<div style="left:395px;top:198px;width:15px;height:20px;background:#ff0000"></div>
<div style="left:410px;top:198px;width:1px;height:20px;background:#808080"></div>
<div style="left:411px;top:198px;width:79px;height:20px;background:#fff"></div>
<div style="left:491px;top:198px;width:48px;height:20px;background:#fff"></div>
<div class="t" style="left:396px;top:202px;color:#fff;"><i class="w7">T</i></div>
<div class="t" style="left:412px;top:202px;color:#000;"><i class="w3">&nbsp;</i><i class="w3">&nbsp;</i><i class="w7">3</i><i class="w7">1</i><i class="w7">6</i></div>
<div class="t" style="left:530px;top:202px;color:#000;"><i class="w7">2</i></div>
<div style="left:379px;top:218px;width:160px;height:1px;background:#808080"></div>
<div style="left:379px;top:218px;width:1px;height:1px;background:#fff"></div>
<div style="left:379px;top:219px;width:15px;height:20px;background:#d8d8d8"></div>
<div style="left:394px;top:219px;width:1px;height:20px;background:#808080"></div>
<div style="left:395px;top:219px;width:15px;height:20px;background:#ff0000"></div>
<div style="left:410px;top:219px;width:1px;height:20px;background:#808080"></div>
<div style="left:411px;top:219px;width:79px;height:20px;background:#fff"></div>
<div style="left:491px;top:219px;width:48px;height:20px;background:#fff"></div>
<div class="t" style="left:396px;top:223px;color:#fff;"><i class="w7">T</i></div>
<div class="t" style="left:412px;top:223px;color:#000;"><i class="w3">&nbsp;</i><i class="w3">&nbsp;</i><i class="w7">3</i><i class="w7">1</i><i class="w7">7</i></div>
<div class="t" style="left:530px;top:223px;color:#000;"><i class="w7">2</i></div>
<div style="left:379px;top:239px;width:160px;height:1px;background:#808080"></div>
<div style="left:379px;top:239px;width:1px;height:1px;background:#fff"></div>
<div style="left:379px;top:240px;width:15px;height:20px;background:#d8d8d8"></div>
<div style="left:394px;top:240px;width:1px;height:20px;background:#808080"></div>
<div style="left:395px;top:240px;width:15px;height:20px;background:#ff0000"></div>
<div style="left:410px;top:240px;width:1px;height:20px;background:#808080"></div>
<div style="left:411px;top:240px;width:79px;height:20px;background:#fff"></div>
<div style="left:491px;top:240px;width:48px;height:20px;background:#fff"></div>
<div class="t" style="left:396px;top:244px;color:#fff;"><i class="w7">T</i></div>
<div class="t" style="left:412px;top:244px;color:#000;"><i class="w3">&nbsp;</i><i class="w3">&nbsp;</i><i class="w7">3</i><i class="w7">1</i><i class="w7">8</i></div>
<div class="t" style="left:530px;top:244px;color:#000;"><i class="w7">2</i></div>
<div style="left:379px;top:260px;width:160px;height:1px;background:#808080"></div>
<div style="left:379px;top:260px;width:1px;height:1px;background:#fff"></div>
<div style="left:379px;top:261px;width:15px;height:20px;background:#d8d8d8"></div>
<div style="left:394px;top:261px;width:1px;height:20px;background:#808080"></div>
<div style="left:395px;top:261px;width:15px;height:20px;background:#ff0000"></div>
<div style="left:410px;top:261px;width:1px;height:20px;background:#808080"></div>
<div style="left:411px;top:261px;width:79px;height:20px;background:#fff"></div>
<div style="left:491px;top:261px;width:48px;height:20px;background:#fff"></div>
<div class="t" style="left:396px;top:265px;color:#fff;"><i class="w7">T</i></div>
<div class="t" style="left:412px;top:265px;color:#000;"><i class="w3">&nbsp;</i><i class="w3">&nbsp;</i><i class="w7">3</i><i class="w7">1</i><i class="w7">9</i></div>
<div class="t" style="left:530px;top:265px;color:#000;"><i class="w7">2</i></div>
<div style="left:379px;top:281px;width:160px;height:1px;background:#808080"></div>
<div style="left:379px;top:281px;width:1px;height:1px;background:#fff"></div>
<div style="left:379px;top:282px;width:15px;height:20px;background:#d8d8d8"></div>
<div style="left:394px;top:282px;width:1px;height:20px;background:#808080"></div>
<div style="left:395px;top:282px;width:15px;height:20px;background:#ff0000"></div>
<div style="left:410px;top:282px;width:1px;height:20px;background:#808080"></div>
<div style="left:411px;top:282px;width:79px;height:20px;background:#fff"></div>
<div style="left:491px;top:282px;width:48px;height:20px;background:#fff"></div>
<div class="t" style="left:396px;top:286px;color:#fff;"><i class="w7">T</i></div>
<div class="t" style="left:412px;top:286px;color:#000;"><i class="w3">&nbsp;</i><i class="w3">&nbsp;</i><i class="w7">3</i><i class="w7">2</i><i class="w7">0</i></div>
<div class="t" style="left:530px;top:286px;color:#000;"><i class="w7">2</i></div>
<div style="left:379px;top:302px;width:160px;height:1px;background:#808080"></div>
<div style="left:379px;top:302px;width:1px;height:1px;background:#fff"></div>
<div style="left:379px;top:303px;width:15px;height:20px;background:#d8d8d8"></div>
<div style="left:394px;top:303px;width:1px;height:20px;background:#808080"></div>
<div style="left:395px;top:303px;width:15px;height:20px;background:#ff0000"></div>
<div style="left:410px;top:303px;width:1px;height:20px;background:#808080"></div>
<div style="left:411px;top:303px;width:79px;height:20px;background:#fff"></div>
<div style="left:491px;top:303px;width:48px;height:20px;background:#fff"></div>
<div class="t" style="left:396px;top:307px;color:#fff;"><i class="w7">T</i></div>
<div class="t" style="left:412px;top:307px;color:#000;"><i class="w3">&nbsp;</i><i class="w3">&nbsp;</i><i class="w7">3</i><i class="w7">2</i><i class="w7">1</i></div>
<div class="t" style="left:530px;top:307px;color:#000;"><i class="w7">2</i></div>
<div style="left:379px;top:323px;width:160px;height:1px;background:#808080"></div>
<div style="left:379px;top:323px;width:1px;height:1px;background:#fff"></div>
<div style="left:379px;top:324px;width:15px;height:20px;background:#d8d8d8"></div>
<div style="left:394px;top:324px;width:1px;height:20px;background:#808080"></div>
<div style="left:395px;top:324px;width:15px;height:20px;background:#ff0000"></div>
<div style="left:410px;top:324px;width:1px;height:20px;background:#808080"></div>
<div style="left:411px;top:324px;width:79px;height:20px;background:#fff"></div>
<div style="left:491px;top:324px;width:48px;height:20px;background:#fff"></div>
<div class="t" style="left:396px;top:328px;color:#fff;"><i class="w7">T</i></div>
<div class="t" style="left:412px;top:328px;color:#000;"><i class="w3">&nbsp;</i><i class="w3">&nbsp;</i><i class="w7">3</i><i class="w7">2</i><i class="w7">2</i></div>
<div class="t" style="left:530px;top:328px;color:#000;"><i class="w7">2</i></div>
<div style="left:379px;top:344px;width:160px;height:1px;background:#808080"></div>
<div class="t" style="left:433px;top:345px;color:#000030;"><i class="w9">C</i><i class="w4">r</i><i class="w7">e</i><i class="w7">d</i><i class="w3">i</i><i class="w3">t</i><i class="w7">s</i></div>
<div class="t" style="left:507px;top:349px;color:#000030;"><i class="w7">2</i><i class="w7">4</i><i class="w3">&nbsp;</i><i class="w3">/</i><i class="w3">&nbsp;</i><i class="w7">0</i></div>
<div style="left:539px;top:71px;width:16px;height:16px;background:#f0f0f0;border:1px solid;border-color:#f0f0f0 #000 #000 #f0f0f0;box-shadow:inset 1px 1px #fff,inset -1px -1px #a0a0a0;box-sizing:border-box"></div>
<svg style="position:absolute;left:543px;top:77px" width="7" height="4" shape-rendering="crispEdges"><path d="M3 0h1v1h1v1h1v1h1v1H0V3h1V2h1V1h1z" fill="#000"/></svg>
<div style="left:539px;top:87px;width:16px;height:242px;background:#d8d8d8;border:1px solid;border-color:#f0f0f0 #696969 #696969 #f0f0f0;box-shadow:inset 1px 1px #fff,inset -1px -1px #a0a0a0;box-sizing:border-box"></div>
<div style="left:539px;top:329px;width:16px;height:16px;background:#f0f0f0;border:1px solid;border-color:#f0f0f0 #000 #000 #f0f0f0;box-shadow:inset 1px 1px #fff,inset -1px -1px #a0a0a0;box-sizing:border-box"></div>
<svg style="position:absolute;left:543px;top:335px" width="7" height="4" shape-rendering="crispEdges"><path d="M0 0h7v1H6v1H5v1H4v1H3V3H2V2H1V1H0z" fill="#000"/></svg>
<div style="left:561px;top:73px;width:1px;height:273px;background:#808080"></div>
<div style="left:561px;top:73px;width:160px;height:1px;background:#808080"></div>
<div style="left:562px;top:345px;width:159px;height:1px;background:#fff"></div>
<div class="t" style="left:563px;top:77px;color:#800000;"><i class="w7">T</i><i class="w7">a</i><i class="w7">s</i><i class="w7">k</i><i class="w3">&nbsp;</i><i class="w3">&nbsp;</i><i class="w7">4</i></div>
<div class="t" style="left:675px;top:77px;color:#800000;"><i class="w9">R</i><i class="w11">m</i><i class="w7">s</i><i class="w3">&nbsp;</i><i class="w7">1</i><i class="w7">2</i></div>
<div style="left:673px;top:74px;width:1px;height:271px;background:#808080"></div>
<div style="left:562px;top:92px;width:159px;height:1px;background:#808080"></div>
<div style="left:562px;top:92px;width:1px;height:1px;background:#fff"></div>
<div style="left:562px;top:93px;width:15px;height:20px;background:#d8d8d8"></div>
<div style="left:577px;top:93px;width:1px;height:20px;background:#808080"></div>
<div style="left:578px;top:93px;width:15px;height:20px;background:#ff0000"></div>
<div style="left:593px;top:93px;width:1px;height:20px;background:#808080"></div>
<div style="left:594px;top:93px;width:79px;height:20px;background:#fff"></div>
<div style="left:674px;top:93px;width:47px;height:20px;background:#fff"></div>
<div class="t" style="left:579px;top:97px;color:#fff;"><i class="w7">T</i></div>
<div class="t" style="left:595px;top:97px;color:#000;"><i class="w3">&nbsp;</i><i class="w3">&nbsp;</i><i class="w7">3</i><i class="w7">2</i><i class="w7">3</i></div>
<div class="t" style="left:713px;top:97px;color:#000;"><i class="w7">2</i></div>
<div style="left:562px;top:113px;width:159px;height:1px;background:#808080"></div>
<div style="left:562px;top:113px;width:1px;height:1px;background:#fff"></div>
<div style="left:562px;top:114px;width:15px;height:20px;background:#d8d8d8"></div>
<div style="left:577px;top:114px;width:1px;height:20px;background:#808080"></div>
<div style="left:578px;top:114px;width:15px;height:20px;background:#ff0000"></div>
<div style="left:593px;top:114px;width:1px;height:20px;background:#808080"></div>
<div style="left:594px;top:114px;width:79px;height:20px;background:#fff"></div>
<div style="left:674px;top:114px;width:47px;height:20px;background:#fff"></div>
<div class="t" style="left:579px;top:118px;color:#fff;"><i class="w7">T</i></div>
<div class="t" style="left:595px;top:118px;color:#000;"><i class="w3">&nbsp;</i><i class="w3">&nbsp;</i><i class="w7">3</i><i class="w7">2</i><i class="w7">4</i></div>
<div class="t" style="left:713px;top:118px;color:#000;"><i class="w7">2</i></div>
<div style="left:562px;top:134px;width:159px;height:1px;background:#808080"></div>
<div style="left:562px;top:134px;width:1px;height:1px;background:#fff"></div>
<div style="left:562px;top:135px;width:15px;height:20px;background:#d8d8d8"></div>
<div style="left:577px;top:135px;width:1px;height:20px;background:#808080"></div>
<div style="left:578px;top:135px;width:15px;height:20px;background:#ff0000"></div>
<div style="left:593px;top:135px;width:1px;height:20px;background:#808080"></div>
<div style="left:594px;top:135px;width:79px;height:20px;background:#fff"></div>
<div style="left:674px;top:135px;width:47px;height:20px;background:#fff"></div>
<div class="t" style="left:579px;top:139px;color:#fff;"><i class="w7">T</i></div>
<div class="t" style="left:595px;top:139px;color:#000;"><i class="w3">&nbsp;</i><i class="w3">&nbsp;</i><i class="w7">3</i><i class="w7">2</i><i class="w7">5</i></div>
<div class="t" style="left:713px;top:139px;color:#000;"><i class="w7">2</i></div>
<div style="left:562px;top:155px;width:159px;height:1px;background:#808080"></div>
<div style="left:562px;top:155px;width:1px;height:1px;background:#fff"></div>
<div style="left:562px;top:156px;width:15px;height:20px;background:#d8d8d8"></div>
<div style="left:577px;top:156px;width:1px;height:20px;background:#808080"></div>
<div style="left:578px;top:156px;width:15px;height:20px;background:#ff0000"></div>
<div style="left:593px;top:156px;width:1px;height:20px;background:#808080"></div>
<div style="left:594px;top:156px;width:79px;height:20px;background:#fff"></div>
<div style="left:674px;top:156px;width:47px;height:20px;background:#fff"></div>
<div class="t" style="left:579px;top:160px;color:#fff;"><i class="w7">T</i></div>
<div class="t" style="left:595px;top:160px;color:#000;"><i class="w3">&nbsp;</i><i class="w3">&nbsp;</i><i class="w7">3</i><i class="w7">2</i><i class="w7">6</i></div>
<div class="t" style="left:713px;top:160px;color:#000;"><i class="w7">2</i></div>
<div style="left:562px;top:176px;width:159px;height:1px;background:#808080"></div>
<div style="left:562px;top:176px;width:1px;height:1px;background:#fff"></div>
<div style="left:562px;top:177px;width:15px;height:20px;background:#d8d8d8"></div>
<div style="left:577px;top:177px;width:1px;height:20px;background:#808080"></div>
<div style="left:578px;top:177px;width:15px;height:20px;background:#ff0000"></div>
<div style="left:593px;top:177px;width:1px;height:20px;background:#808080"></div>
<div style="left:594px;top:177px;width:79px;height:20px;background:#fff"></div>
<div style="left:674px;top:177px;width:47px;height:20px;background:#fff"></div>
<div class="t" style="left:579px;top:181px;color:#fff;"><i class="w7">T</i></div>
<div class="t" style="left:595px;top:181px;color:#000;"><i class="w3">&nbsp;</i><i class="w3">&nbsp;</i><i class="w7">3</i><i class="w7">2</i><i class="w7">7</i></div>
<div class="t" style="left:713px;top:181px;color:#000;"><i class="w7">2</i></div>
<div style="left:562px;top:197px;width:159px;height:1px;background:#808080"></div>
<div style="left:562px;top:197px;width:1px;height:1px;background:#fff"></div>
<div style="left:562px;top:198px;width:15px;height:20px;background:#d8d8d8"></div>
<div style="left:577px;top:198px;width:1px;height:20px;background:#808080"></div>
<div style="left:578px;top:198px;width:15px;height:20px;background:#ff0000"></div>
<div style="left:593px;top:198px;width:1px;height:20px;background:#808080"></div>
<div style="left:594px;top:198px;width:79px;height:20px;background:#fff"></div>
<div style="left:674px;top:198px;width:47px;height:20px;background:#fff"></div>
<div class="t" style="left:579px;top:202px;color:#fff;"><i class="w7">T</i></div>
<div class="t" style="left:595px;top:202px;color:#000;"><i class="w3">&nbsp;</i><i class="w3">&nbsp;</i><i class="w7">3</i><i class="w7">2</i><i class="w7">8</i></div>
<div class="t" style="left:713px;top:202px;color:#000;"><i class="w7">2</i></div>
<div style="left:562px;top:218px;width:159px;height:1px;background:#808080"></div>
<div style="left:562px;top:218px;width:1px;height:1px;background:#fff"></div>
<div style="left:562px;top:219px;width:15px;height:20px;background:#d8d8d8"></div>
<div style="left:577px;top:219px;width:1px;height:20px;background:#808080"></div>
<div style="left:578px;top:219px;width:15px;height:20px;background:#ff0000"></div>
<div style="left:593px;top:219px;width:1px;height:20px;background:#808080"></div>
<div style="left:594px;top:219px;width:79px;height:20px;background:#fff"></div>
<div style="left:674px;top:219px;width:47px;height:20px;background:#fff"></div>
<div class="t" style="left:579px;top:223px;color:#fff;"><i class="w7">T</i></div>
<div class="t" style="left:595px;top:223px;color:#000;"><i class="w3">&nbsp;</i><i class="w3">&nbsp;</i><i class="w7">3</i><i class="w7">2</i><i class="w7">9</i></div>
<div class="t" style="left:713px;top:223px;color:#000;"><i class="w7">2</i></div>
<div style="left:562px;top:239px;width:159px;height:1px;background:#808080"></div>
<div style="left:562px;top:239px;width:1px;height:1px;background:#fff"></div>
<div style="left:562px;top:240px;width:15px;height:20px;background:#d8d8d8"></div>
<div style="left:577px;top:240px;width:1px;height:20px;background:#808080"></div>
<div style="left:578px;top:240px;width:15px;height:20px;background:#ff0000"></div>
<div style="left:593px;top:240px;width:1px;height:20px;background:#808080"></div>
<div style="left:594px;top:240px;width:79px;height:20px;background:#fff"></div>
<div style="left:674px;top:240px;width:47px;height:20px;background:#fff"></div>
<div class="t" style="left:579px;top:244px;color:#fff;"><i class="w7">T</i></div>
<div class="t" style="left:595px;top:244px;color:#000;"><i class="w3">&nbsp;</i><i class="w3">&nbsp;</i><i class="w7">3</i><i class="w7">3</i><i class="w7">0</i></div>
<div class="t" style="left:713px;top:244px;color:#000;"><i class="w7">2</i></div>
<div style="left:562px;top:260px;width:159px;height:1px;background:#808080"></div>
<div style="left:562px;top:260px;width:1px;height:1px;background:#fff"></div>
<div style="left:562px;top:261px;width:15px;height:20px;background:#d8d8d8"></div>
<div style="left:577px;top:261px;width:1px;height:20px;background:#808080"></div>
<div style="left:578px;top:261px;width:15px;height:20px;background:#ff0000"></div>
<div style="left:593px;top:261px;width:1px;height:20px;background:#808080"></div>
<div style="left:594px;top:261px;width:79px;height:20px;background:#fff"></div>
<div style="left:674px;top:261px;width:47px;height:20px;background:#fff"></div>
<div class="t" style="left:579px;top:265px;color:#fff;"><i class="w7">T</i></div>
<div class="t" style="left:595px;top:265px;color:#000;"><i class="w3">&nbsp;</i><i class="w3">&nbsp;</i><i class="w7">3</i><i class="w7">3</i><i class="w7">1</i></div>
<div class="t" style="left:713px;top:265px;color:#000;"><i class="w7">2</i></div>
<div style="left:562px;top:281px;width:159px;height:1px;background:#808080"></div>
<div style="left:562px;top:281px;width:1px;height:1px;background:#fff"></div>
<div style="left:562px;top:282px;width:15px;height:20px;background:#d8d8d8"></div>
<div style="left:577px;top:282px;width:1px;height:20px;background:#808080"></div>
<div style="left:578px;top:282px;width:15px;height:20px;background:#ff0000"></div>
<div style="left:593px;top:282px;width:1px;height:20px;background:#808080"></div>
<div style="left:594px;top:282px;width:79px;height:20px;background:#fff"></div>
<div style="left:674px;top:282px;width:47px;height:20px;background:#fff"></div>
<div class="t" style="left:579px;top:286px;color:#fff;"><i class="w7">T</i></div>
<div class="t" style="left:595px;top:286px;color:#000;"><i class="w3">&nbsp;</i><i class="w3">&nbsp;</i><i class="w7">3</i><i class="w7">3</i><i class="w7">2</i></div>
<div class="t" style="left:713px;top:286px;color:#000;"><i class="w7">2</i></div>
<div style="left:562px;top:302px;width:159px;height:1px;background:#808080"></div>
<div style="left:562px;top:302px;width:1px;height:1px;background:#fff"></div>
<div style="left:562px;top:303px;width:15px;height:20px;background:#d8d8d8"></div>
<div style="left:577px;top:303px;width:1px;height:20px;background:#808080"></div>
<div style="left:578px;top:303px;width:15px;height:20px;background:#ff0000"></div>
<div style="left:593px;top:303px;width:1px;height:20px;background:#808080"></div>
<div style="left:594px;top:303px;width:79px;height:20px;background:#fff"></div>
<div style="left:674px;top:303px;width:47px;height:20px;background:#fff"></div>
<div class="t" style="left:579px;top:307px;color:#fff;"><i class="w7">T</i></div>
<div class="t" style="left:595px;top:307px;color:#000;"><i class="w3">&nbsp;</i><i class="w3">&nbsp;</i><i class="w7">3</i><i class="w7">3</i><i class="w7">3</i></div>
<div class="t" style="left:713px;top:307px;color:#000;"><i class="w7">2</i></div>
<div style="left:562px;top:323px;width:159px;height:1px;background:#808080"></div>
<div style="left:562px;top:323px;width:1px;height:1px;background:#fff"></div>
<div style="left:562px;top:324px;width:15px;height:20px;background:#d8d8d8"></div>
<div style="left:577px;top:324px;width:1px;height:20px;background:#808080"></div>
<div style="left:578px;top:324px;width:15px;height:20px;background:#ff0000"></div>
<div style="left:593px;top:324px;width:1px;height:20px;background:#808080"></div>
<div style="left:594px;top:324px;width:79px;height:20px;background:#fff"></div>
<div style="left:674px;top:324px;width:47px;height:20px;background:#fff"></div>
<div class="t" style="left:579px;top:328px;color:#fff;"><i class="w7">T</i></div>
<div class="t" style="left:595px;top:328px;color:#000;"><i class="w3">&nbsp;</i><i class="w3">&nbsp;</i><i class="w7">3</i><i class="w7">3</i><i class="w7">4</i></div>
<div class="t" style="left:713px;top:328px;color:#000;"><i class="w7">2</i></div>
<div style="left:562px;top:344px;width:159px;height:1px;background:#808080"></div>
<div class="t" style="left:616px;top:345px;color:#000030;"><i class="w9">C</i><i class="w4">r</i><i class="w7">e</i><i class="w7">d</i><i class="w3">i</i><i class="w3">t</i><i class="w7">s</i></div>
<div class="t" style="left:690px;top:349px;color:#000030;"><i class="w7">2</i><i class="w7">4</i><i class="w3">&nbsp;</i><i class="w3">/</i><i class="w3">&nbsp;</i><i class="w7">0</i></div>
<div style="left:721px;top:71px;width:16px;height:16px;background:#f0f0f0;border:1px solid;border-color:#f0f0f0 #000 #000 #f0f0f0;box-shadow:inset 1px 1px #fff,inset -1px -1px #a0a0a0;box-sizing:border-box"></div>
<svg style="position:absolute;left:725px;top:77px" width="7" height="4" shape-rendering="crispEdges"><path d="M3 0h1v1h1v1h1v1h1v1H0V3h1V2h1V1h1z" fill="#000"/></svg>
<div style="left:721px;top:87px;width:16px;height:242px;background:#d8d8d8;border:1px solid;border-color:#f0f0f0 #696969 #696969 #f0f0f0;box-shadow:inset 1px 1px #fff,inset -1px -1px #a0a0a0;box-sizing:border-box"></div>
<div style="left:721px;top:329px;width:16px;height:16px;background:#f0f0f0;border:1px solid;border-color:#f0f0f0 #000 #000 #f0f0f0;box-shadow:inset 1px 1px #fff,inset -1px -1px #a0a0a0;box-sizing:border-box"></div>
<svg style="position:absolute;left:725px;top:335px" width="7" height="4" shape-rendering="crispEdges"><path d="M0 0h7v1H6v1H5v1H4v1H3V3H2V2H1V1H0z" fill="#000"/></svg>
<div style="left:744px;top:73px;width:1px;height:273px;background:#808080"></div>
<div style="left:744px;top:73px;width:160px;height:1px;background:#808080"></div>
<div style="left:745px;top:345px;width:159px;height:1px;background:#fff"></div>
<div class="t" style="left:746px;top:77px;color:#800000;"><i class="w7">T</i><i class="w7">a</i><i class="w7">s</i><i class="w7">k</i><i class="w3">&nbsp;</i><i class="w3">&nbsp;</i><i class="w7">5</i></div>
<div class="t" style="left:858px;top:77px;color:#800000;"><i class="w9">R</i><i class="w11">m</i><i class="w7">s</i><i class="w3">&nbsp;</i><i class="w7">1</i><i class="w7">2</i></div>
<div style="left:856px;top:74px;width:1px;height:271px;background:#808080"></div>
<div style="left:745px;top:92px;width:159px;height:1px;background:#808080"></div>
<div style="left:745px;top:92px;width:1px;height:1px;background:#fff"></div>
<div style="left:745px;top:93px;width:15px;height:20px;background:#d8d8d8"></div>
<div style="left:760px;top:93px;width:1px;height:20px;background:#808080"></div>
<div style="left:761px;top:93px;width:15px;height:20px;background:#ff0000"></div>
<div style="left:776px;top:93px;width:1px;height:20px;background:#808080"></div>
<div style="left:777px;top:93px;width:79px;height:20px;background:#fff"></div>
<div style="left:857px;top:93px;width:47px;height:20px;background:#fff"></div>
<div class="t" style="left:762px;top:97px;color:#fff;"><i class="w7">T</i></div>
<div class="t" style="left:778px;top:97px;color:#000;"><i class="w3">&nbsp;</i><i class="w3">&nbsp;</i><i class="w7">3</i><i class="w7">3</i><i class="w7">5</i></div>
<div class="t" style="left:896px;top:97px;color:#000;"><i class="w7">2</i></div>
<div style="left:745px;top:113px;width:159px;height:1px;background:#808080"></div>
<div style="left:745px;top:113px;width:1px;height:1px;background:#fff"></div>
<div style="left:745px;top:114px;width:15px;height:20px;background:#d8d8d8"></div>
<div style="left:760px;top:114px;width:1px;height:20px;background:#808080"></div>
<div style="left:761px;top:114px;width:15px;height:20px;background:#ff0000"></div>
<div style="left:776px;top:114px;width:1px;height:20px;background:#808080"></div>
<div style="left:777px;top:114px;width:79px;height:20px;background:#fff"></div>
<div style="left:857px;top:114px;width:47px;height:20px;background:#fff"></div>
<div class="t" style="left:762px;top:118px;color:#fff;"><i class="w8">V</i></div>
<div class="t" style="left:778px;top:118px;color:#000;"><i class="w5">*</i><i class="w3">&nbsp;</i><i class="w7">3</i><i class="w7">4</i><i class="w7">4</i></div>
<div class="t" style="left:896px;top:118px;color:#000;"><i class="w7">5</i></div>
<div style="left:745px;top:134px;width:159px;height:1px;background:#808080"></div>
<div style="left:745px;top:134px;width:1px;height:1px;background:#fff"></div>
<div style="left:745px;top:135px;width:15px;height:20px;background:#d8d8d8"></div>
<div style="left:760px;top:135px;width:1px;height:20px;background:#808080"></div>
<div style="left:761px;top:135px;width:15px;height:20px;background:#ff0000"></div>
<div style="left:776px;top:135px;width:1px;height:20px;background:#808080"></div>
<div style="left:777px;top:135px;width:79px;height:20px;background:#fff"></div>
<div style="left:857px;top:135px;width:47px;height:20px;background:#fff"></div>
<div class="t" style="left:762px;top:139px;color:#fff;"><i class="w7">T</i></div>
<div class="t" style="left:778px;top:139px;color:#000;"><i class="w3">&nbsp;</i><i class="w3">&nbsp;</i><i class="w7">4</i><i class="w7">0</i><i class="w7">2</i></div>
<div class="t" style="left:896px;top:139px;color:#000;"><i class="w7">3</i></div>
<div style="left:745px;top:155px;width:159px;height:1px;background:#808080"></div>
<div style="left:745px;top:155px;width:1px;height:1px;background:#fff"></div>
<div style="left:745px;top:156px;width:15px;height:20px;background:#d8d8d8"></div>
<div style="left:760px;top:156px;width:1px;height:20px;background:#808080"></div>
<div style="left:761px;top:156px;width:15px;height:20px;background:#ff0000"></div>
<div style="left:776px;top:156px;width:1px;height:20px;background:#808080"></div>
<div style="left:777px;top:156px;width:79px;height:20px;background:#fff"></div>
<div style="left:857px;top:156px;width:47px;height:20px;background:#fff"></div>
<div class="t" style="left:762px;top:160px;color:#fff;"><i class="w7">T</i></div>
<div class="t" style="left:778px;top:160px;color:#000;"><i class="w3">&nbsp;</i><i class="w3">&nbsp;</i><i class="w7">4</i><i class="w7">0</i><i class="w7">3</i></div>
<div class="t" style="left:896px;top:160px;color:#000;"><i class="w7">3</i></div>
<div style="left:745px;top:176px;width:159px;height:1px;background:#808080"></div>
<div style="left:745px;top:176px;width:1px;height:1px;background:#fff"></div>
<div style="left:745px;top:177px;width:15px;height:20px;background:#d8d8d8"></div>
<div style="left:760px;top:177px;width:1px;height:20px;background:#808080"></div>
<div style="left:761px;top:177px;width:15px;height:20px;background:#ff0000"></div>
<div style="left:776px;top:177px;width:1px;height:20px;background:#808080"></div>
<div style="left:777px;top:177px;width:79px;height:20px;background:#fff"></div>
<div style="left:857px;top:177px;width:47px;height:20px;background:#fff"></div>
<div class="t" style="left:762px;top:181px;color:#fff;"><i class="w7">T</i></div>
<div class="t" style="left:778px;top:181px;color:#000;"><i class="w3">&nbsp;</i><i class="w3">&nbsp;</i><i class="w7">4</i><i class="w7">0</i><i class="w7">4</i></div>
<div class="t" style="left:896px;top:181px;color:#000;"><i class="w7">3</i></div>
<div style="left:745px;top:197px;width:159px;height:1px;background:#808080"></div>
<div style="left:745px;top:197px;width:1px;height:1px;background:#fff"></div>
<div style="left:745px;top:198px;width:15px;height:20px;background:#d8d8d8"></div>
<div style="left:760px;top:198px;width:1px;height:20px;background:#808080"></div>
<div style="left:761px;top:198px;width:15px;height:20px;background:#ff0000"></div>
<div style="left:776px;top:198px;width:1px;height:20px;background:#808080"></div>
<div style="left:777px;top:198px;width:79px;height:20px;background:#fff"></div>
<div style="left:857px;top:198px;width:47px;height:20px;background:#fff"></div>
<div class="t" style="left:762px;top:202px;color:#fff;"><i class="w7">T</i></div>
<div class="t" style="left:778px;top:202px;color:#000;"><i class="w3">&nbsp;</i><i class="w3">&nbsp;</i><i class="w7">4</i><i class="w7">0</i><i class="w7">5</i></div>
<div class="t" style="left:896px;top:202px;color:#000;"><i class="w7">3</i></div>
<div style="left:745px;top:218px;width:159px;height:1px;background:#808080"></div>
<div style="left:745px;top:218px;width:1px;height:1px;background:#fff"></div>
<div style="left:745px;top:219px;width:15px;height:20px;background:#d8d8d8"></div>
<div style="left:760px;top:219px;width:1px;height:20px;background:#808080"></div>
<div style="left:761px;top:219px;width:15px;height:20px;background:#ff0000"></div>
<div style="left:776px;top:219px;width:1px;height:20px;background:#808080"></div>
<div style="left:777px;top:219px;width:79px;height:20px;background:#fff"></div>
<div style="left:857px;top:219px;width:47px;height:20px;background:#fff"></div>
<div class="t" style="left:762px;top:223px;color:#fff;"><i class="w7">T</i></div>
<div class="t" style="left:778px;top:223px;color:#000;"><i class="w3">&nbsp;</i><i class="w3">&nbsp;</i><i class="w7">4</i><i class="w7">0</i><i class="w7">6</i></div>
<div class="t" style="left:896px;top:223px;color:#000;"><i class="w7">3</i></div>
<div style="left:745px;top:239px;width:159px;height:1px;background:#808080"></div>
<div style="left:745px;top:239px;width:1px;height:1px;background:#fff"></div>
<div style="left:745px;top:240px;width:15px;height:20px;background:#d8d8d8"></div>
<div style="left:760px;top:240px;width:1px;height:20px;background:#808080"></div>
<div style="left:761px;top:240px;width:15px;height:20px;background:#ff0000"></div>
<div style="left:776px;top:240px;width:1px;height:20px;background:#808080"></div>
<div style="left:777px;top:240px;width:79px;height:20px;background:#fff"></div>
<div style="left:857px;top:240px;width:47px;height:20px;background:#fff"></div>
<div class="t" style="left:762px;top:244px;color:#fff;"><i class="w7">T</i></div>
<div class="t" style="left:778px;top:244px;color:#000;"><i class="w3">&nbsp;</i><i class="w3">&nbsp;</i><i class="w7">4</i><i class="w7">0</i><i class="w7">8</i></div>
<div class="t" style="left:896px;top:244px;color:#000;"><i class="w7">3</i></div>
<div style="left:745px;top:260px;width:159px;height:1px;background:#808080"></div>
<div style="left:745px;top:260px;width:1px;height:1px;background:#fff"></div>
<div style="left:745px;top:261px;width:15px;height:20px;background:#d8d8d8"></div>
<div style="left:760px;top:261px;width:1px;height:20px;background:#808080"></div>
<div style="left:761px;top:261px;width:15px;height:20px;background:#ff0000"></div>
<div style="left:776px;top:261px;width:1px;height:20px;background:#808080"></div>
<div style="left:777px;top:261px;width:79px;height:20px;background:#fff"></div>
<div style="left:857px;top:261px;width:47px;height:20px;background:#fff"></div>
<div class="t" style="left:762px;top:265px;color:#fff;"><i class="w7">L</i></div>
<div class="t" style="left:778px;top:265px;color:#000;"><i class="w5">*</i><i class="w3">&nbsp;</i><i class="w7">4</i><i class="w7">0</i><i class="w7">9</i></div>
<div class="t" style="left:896px;top:265px;color:#000;"><i class="w7">3</i></div>
<div style="left:745px;top:281px;width:159px;height:1px;background:#808080"></div>
<div style="left:745px;top:281px;width:1px;height:1px;background:#fff"></div>
<div style="left:745px;top:282px;width:15px;height:20px;background:#d8d8d8"></div>
<div style="left:760px;top:282px;width:1px;height:20px;background:#808080"></div>
<div style="left:761px;top:282px;width:15px;height:20px;background:#ff0000"></div>
<div style="left:776px;top:282px;width:1px;height:20px;background:#808080"></div>
<div style="left:777px;top:282px;width:79px;height:20px;background:#fff"></div>
<div style="left:857px;top:282px;width:47px;height:20px;background:#fff"></div>
<div class="t" style="left:762px;top:286px;color:#fff;"><i class="w7">T</i></div>
<div class="t" style="left:778px;top:286px;color:#000;"><i class="w3">&nbsp;</i><i class="w3">&nbsp;</i><i class="w7">4</i><i class="w7">1</i><i class="w7">0</i></div>
<div class="t" style="left:896px;top:286px;color:#000;"><i class="w7">3</i></div>
<div style="left:745px;top:302px;width:159px;height:1px;background:#808080"></div>
<div style="left:745px;top:302px;width:1px;height:1px;background:#fff"></div>
<div style="left:745px;top:303px;width:15px;height:20px;background:#d8d8d8"></div>
<div style="left:760px;top:303px;width:1px;height:20px;background:#808080"></div>
<div style="left:761px;top:303px;width:15px;height:20px;background:#ff0000"></div>
<div style="left:776px;top:303px;width:1px;height:20px;background:#808080"></div>
<div style="left:777px;top:303px;width:79px;height:20px;background:#fff"></div>
<div style="left:857px;top:303px;width:47px;height:20px;background:#fff"></div>
<div class="t" style="left:762px;top:307px;color:#fff;"><i class="w7">T</i></div>
<div class="t" style="left:778px;top:307px;color:#000;"><i class="w3">&nbsp;</i><i class="w3">&nbsp;</i><i class="w7">4</i><i class="w7">1</i><i class="w7">1</i></div>
<div class="t" style="left:896px;top:307px;color:#000;"><i class="w7">3</i></div>
<div style="left:745px;top:323px;width:159px;height:1px;background:#808080"></div>
<div style="left:745px;top:323px;width:1px;height:1px;background:#fff"></div>
<div style="left:745px;top:324px;width:15px;height:20px;background:#d8d8d8"></div>
<div style="left:760px;top:324px;width:1px;height:20px;background:#808080"></div>
<div style="left:761px;top:324px;width:15px;height:20px;background:#ff0000"></div>
<div style="left:776px;top:324px;width:1px;height:20px;background:#808080"></div>
<div style="left:777px;top:324px;width:79px;height:20px;background:#fff"></div>
<div style="left:857px;top:324px;width:47px;height:20px;background:#fff"></div>
<div class="t" style="left:762px;top:328px;color:#fff;"><i class="w7">T</i></div>
<div class="t" style="left:778px;top:328px;color:#000;"><i class="w3">&nbsp;</i><i class="w3">&nbsp;</i><i class="w7">4</i><i class="w7">1</i><i class="w7">2</i></div>
<div class="t" style="left:896px;top:328px;color:#000;"><i class="w7">3</i></div>
<div style="left:745px;top:344px;width:159px;height:1px;background:#808080"></div>
<div class="t" style="left:799px;top:345px;color:#000030;"><i class="w9">C</i><i class="w4">r</i><i class="w7">e</i><i class="w7">d</i><i class="w3">i</i><i class="w3">t</i><i class="w7">s</i></div>
<div class="t" style="left:873px;top:349px;color:#000030;"><i class="w7">3</i><i class="w7">7</i><i class="w3">&nbsp;</i><i class="w3">/</i><i class="w3">&nbsp;</i><i class="w7">0</i></div>
<div style="left:904px;top:71px;width:16px;height:16px;background:#f0f0f0;border:1px solid;border-color:#f0f0f0 #000 #000 #f0f0f0;box-shadow:inset 1px 1px #fff,inset -1px -1px #a0a0a0;box-sizing:border-box"></div>
<svg style="position:absolute;left:908px;top:77px" width="7" height="4" shape-rendering="crispEdges"><path d="M3 0h1v1h1v1h1v1h1v1H0V3h1V2h1V1h1z" fill="#000"/></svg>
<div style="left:904px;top:87px;width:16px;height:242px;background:#d8d8d8;border:1px solid;border-color:#f0f0f0 #696969 #696969 #f0f0f0;box-shadow:inset 1px 1px #fff,inset -1px -1px #a0a0a0;box-sizing:border-box"></div>
<div style="left:904px;top:329px;width:16px;height:16px;background:#f0f0f0;border:1px solid;border-color:#f0f0f0 #000 #000 #f0f0f0;box-shadow:inset 1px 1px #fff,inset -1px -1px #a0a0a0;box-sizing:border-box"></div>
<svg style="position:absolute;left:908px;top:335px" width="7" height="4" shape-rendering="crispEdges"><path d="M0 0h7v1H6v1H5v1H4v1H3V3H2V2H1V1H0z" fill="#000"/></svg>
<div style="left:13px;top:391px;width:1px;height:252px;background:#808080"></div>
<div style="left:13px;top:391px;width:160px;height:1px;background:#808080"></div>
<div style="left:14px;top:643px;width:159px;height:1px;background:#fff"></div>
<div style="left:14px;top:642px;width:159px;height:1px;background:#c0c0c0"></div>
<div class="t" style="left:15px;top:395px;color:#800000;"><i class="w7">T</i><i class="w7">a</i><i class="w7">s</i><i class="w7">k</i><i class="w3">&nbsp;</i><i class="w3">&nbsp;</i><i class="w7">6</i></div>
<div class="t" style="left:127px;top:395px;color:#800000;"><i class="w9">R</i><i class="w11">m</i><i class="w7">s</i><i class="w3">&nbsp;</i><i class="w7">1</i><i class="w7">2</i></div>
<div style="left:125px;top:392px;width:1px;height:250px;background:#808080"></div>
<div style="left:14px;top:410px;width:159px;height:1px;background:#808080"></div>
<div style="left:14px;top:410px;width:1px;height:1px;background:#fff"></div>
<div style="left:14px;top:411px;width:15px;height:20px;background:#d8d8d8"></div>
<div style="left:29px;top:411px;width:1px;height:20px;background:#808080"></div>
<div style="left:30px;top:411px;width:15px;height:20px;background:#ff0000"></div>
<div style="left:45px;top:411px;width:1px;height:20px;background:#808080"></div>
<div style="left:46px;top:411px;width:79px;height:20px;background:#fff"></div>
<div style="left:126px;top:411px;width:47px;height:20px;background:#fff"></div>
<div class="t" style="left:31px;top:415px;color:#fff;"><i class="w7">T</i></div>
<div class="t" style="left:47px;top:415px;color:#000;"><i class="w3">&nbsp;</i><i class="w3">&nbsp;</i><i class="w7">4</i><i class="w7">1</i><i class="w7">3</i></div>
<div class="t" style="left:165px;top:415px;color:#000;"><i class="w7">3</i></div>
<div style="left:14px;top:431px;width:159px;height:1px;background:#808080"></div>
<div style="left:14px;top:431px;width:1px;height:1px;background:#fff"></div>
<div style="left:14px;top:432px;width:15px;height:20px;background:#d8d8d8"></div>
<div style="left:29px;top:432px;width:1px;height:20px;background:#808080"></div>
<div style="left:30px;top:432px;width:15px;height:20px;background:#ff0000"></div>
<div style="left:45px;top:432px;width:1px;height:20px;background:#808080"></div>
<div style="left:46px;top:432px;width:79px;height:20px;background:#fff"></div>
<div style="left:126px;top:432px;width:47px;height:20px;background:#fff"></div>
<div class="t" style="left:31px;top:436px;color:#fff;"><i class="w7">T</i></div>
<div class="t" style="left:47px;top:436px;color:#000;"><i class="w3">&nbsp;</i><i class="w3">&nbsp;</i><i class="w7">4</i><i class="w7">1</i><i class="w7">5</i></div>
<div class="t" style="left:165px;top:436px;color:#000;"><i class="w7">3</i></div>
<div style="left:14px;top:452px;width:159px;height:1px;background:#808080"></div>
<div style="left:14px;top:452px;width:1px;height:1px;background:#fff"></div>
<div style="left:14px;top:453px;width:15px;height:20px;background:#d8d8d8"></div>
<div style="left:29px;top:453px;width:1px;height:20px;background:#808080"></div>
<div style="left:30px;top:453px;width:15px;height:20px;background:#ff0000"></div>
<div style="left:45px;top:453px;width:1px;height:20px;background:#808080"></div>
<div style="left:46px;top:453px;width:79px;height:20px;background:#fff"></div>
<div style="left:126px;top:453px;width:47px;height:20px;background:#fff"></div>
<div class="t" style="left:31px;top:457px;color:#fff;"><i class="w7">T</i></div>
<div class="t" style="left:47px;top:457px;color:#000;"><i class="w3">&nbsp;</i><i class="w3">&nbsp;</i><i class="w7">4</i><i class="w7">1</i><i class="w7">6</i></div>
<div class="t" style="left:165px;top:457px;color:#000;"><i class="w7">3</i></div>
<div style="left:14px;top:473px;width:159px;height:1px;background:#808080"></div>
<div style="left:14px;top:473px;width:1px;height:1px;background:#fff"></div>
<div style="left:14px;top:474px;width:15px;height:20px;background:#d8d8d8"></div>
<div style="left:29px;top:474px;width:1px;height:20px;background:#808080"></div>
<div style="left:30px;top:474px;width:15px;height:20px;background:#ff0000"></div>
<div style="left:45px;top:474px;width:1px;height:20px;background:#808080"></div>
<div style="left:46px;top:474px;width:79px;height:20px;background:#fff"></div>
<div style="left:126px;top:474px;width:47px;height:20px;background:#fff"></div>
<div class="t" style="left:31px;top:478px;color:#fff;"><i class="w7">L</i></div>
<div class="t" style="left:47px;top:478px;color:#000;"><i class="w5">*</i><i class="w3">&nbsp;</i><i class="w7">4</i><i class="w7">1</i><i class="w7">7</i></div>
<div class="t" style="left:165px;top:478px;color:#000;"><i class="w7">3</i></div>
<div style="left:14px;top:494px;width:159px;height:1px;background:#808080"></div>
<div style="left:14px;top:494px;width:1px;height:1px;background:#fff"></div>
<div style="left:14px;top:495px;width:15px;height:20px;background:#d8d8d8"></div>
<div style="left:29px;top:495px;width:1px;height:20px;background:#808080"></div>
<div style="left:30px;top:495px;width:15px;height:20px;background:#ff0000"></div>
<div style="left:45px;top:495px;width:1px;height:20px;background:#808080"></div>
<div style="left:46px;top:495px;width:79px;height:20px;background:#fff"></div>
<div style="left:126px;top:495px;width:47px;height:20px;background:#fff"></div>
<div class="t" style="left:31px;top:499px;color:#fff;"><i class="w7">T</i></div>
<div class="t" style="left:47px;top:499px;color:#000;"><i class="w3">&nbsp;</i><i class="w3">&nbsp;</i><i class="w7">4</i><i class="w7">1</i><i class="w7">8</i></div>
<div class="t" style="left:165px;top:499px;color:#000;"><i class="w7">3</i></div>
<div style="left:14px;top:515px;width:159px;height:1px;background:#808080"></div>
<div style="left:14px;top:515px;width:1px;height:1px;background:#fff"></div>
<div style="left:14px;top:516px;width:15px;height:20px;background:#d8d8d8"></div>
<div style="left:29px;top:516px;width:1px;height:20px;background:#808080"></div>
<div style="left:30px;top:516px;width:15px;height:20px;background:#ff0000"></div>
<div style="left:45px;top:516px;width:1px;height:20px;background:#808080"></div>
<div style="left:46px;top:516px;width:79px;height:20px;background:#fff"></div>
<div style="left:126px;top:516px;width:47px;height:20px;background:#fff"></div>
<div class="t" style="left:31px;top:520px;color:#fff;"><i class="w7">T</i></div>
<div class="t" style="left:47px;top:520px;color:#000;"><i class="w3">&nbsp;</i><i class="w3">&nbsp;</i><i class="w7">4</i><i class="w7">2</i><i class="w7">0</i></div>
<div class="t" style="left:165px;top:520px;color:#000;"><i class="w7">3</i></div>
<div style="left:14px;top:536px;width:159px;height:1px;background:#808080"></div>
<div style="left:14px;top:536px;width:1px;height:1px;background:#fff"></div>
<div style="left:14px;top:537px;width:15px;height:20px;background:#d8d8d8"></div>
<div style="left:29px;top:537px;width:1px;height:20px;background:#808080"></div>
<div style="left:30px;top:537px;width:15px;height:20px;background:#ff0000"></div>
<div style="left:45px;top:537px;width:1px;height:20px;background:#808080"></div>
<div style="left:46px;top:537px;width:79px;height:20px;background:#fff"></div>
<div style="left:126px;top:537px;width:47px;height:20px;background:#fff"></div>
<div class="t" style="left:31px;top:541px;color:#fff;"><i class="w7">T</i></div>
<div class="t" style="left:47px;top:541px;color:#000;"><i class="w3">!</i><i class="w3">&nbsp;</i><i class="w7">4</i><i class="w7">2</i><i class="w7">1</i></div>
<div class="t" style="left:165px;top:541px;color:#000;"><i class="w7">3</i></div>
<div style="left:14px;top:557px;width:159px;height:1px;background:#808080"></div>
<div style="left:14px;top:557px;width:1px;height:1px;background:#fff"></div>
<div style="left:14px;top:558px;width:15px;height:20px;background:#d8d8d8"></div>
<div style="left:29px;top:558px;width:1px;height:20px;background:#808080"></div>
<div style="left:30px;top:558px;width:15px;height:20px;background:#ff0000"></div>
<div style="left:45px;top:558px;width:1px;height:20px;background:#808080"></div>
<div style="left:46px;top:558px;width:79px;height:20px;background:#fff"></div>
<div style="left:126px;top:558px;width:47px;height:20px;background:#fff"></div>
<div class="t" style="left:31px;top:562px;color:#fff;"><i class="w8">V</i></div>
<div class="t" style="left:47px;top:562px;color:#000;"><i class="w5">*</i><i class="w3">&nbsp;</i><i class="w7">5</i><i class="w7">0</i><i class="w7">1</i></div>
<div class="t" style="left:165px;top:562px;color:#000;"><i class="w7">2</i></div>
<div style="left:14px;top:578px;width:159px;height:1px;background:#808080"></div>
<div style="left:14px;top:578px;width:1px;height:1px;background:#fff"></div>
<div style="left:14px;top:579px;width:15px;height:20px;background:#d8d8d8"></div>
<div style="left:29px;top:579px;width:1px;height:20px;background:#808080"></div>
<div style="left:30px;top:579px;width:15px;height:20px;background:#ff0000"></div>
<div style="left:45px;top:579px;width:1px;height:20px;background:#808080"></div>
<div style="left:46px;top:579px;width:79px;height:20px;background:#fff"></div>
<div style="left:126px;top:579px;width:47px;height:20px;background:#fff"></div>
<div class="t" style="left:31px;top:583px;color:#fff;"><i class="w7">T</i></div>
<div class="t" style="left:47px;top:583px;color:#000;"><i class="w3">&nbsp;</i><i class="w3">&nbsp;</i><i class="w7">5</i><i class="w7">0</i><i class="w7">3</i></div>
<div class="t" style="left:165px;top:583px;color:#000;"><i class="w7">2</i></div>
<div style="left:14px;top:599px;width:159px;height:1px;background:#808080"></div>
<div style="left:14px;top:599px;width:1px;height:1px;background:#fff"></div>
<div style="left:14px;top:600px;width:15px;height:20px;background:#d8d8d8"></div>
<div style="left:29px;top:600px;width:1px;height:20px;background:#808080"></div>
<div style="left:30px;top:600px;width:15px;height:20px;background:#ff0000"></div>
<div style="left:45px;top:600px;width:1px;height:20px;background:#808080"></div>
<div style="left:46px;top:600px;width:79px;height:20px;background:#fff"></div>
<div style="left:126px;top:600px;width:47px;height:20px;background:#fff"></div>
<div class="t" style="left:31px;top:604px;color:#fff;"><i class="w7">T</i></div>
<div class="t" style="left:47px;top:604px;color:#000;"><i class="w3">&nbsp;</i><i class="w3">&nbsp;</i><i class="w7">5</i><i class="w7">0</i><i class="w7">7</i></div>
<div class="t" style="left:165px;top:604px;color:#000;"><i class="w7">2</i></div>
<div style="left:14px;top:620px;width:159px;height:1px;background:#808080"></div>
<div style="left:14px;top:620px;width:1px;height:1px;background:#fff"></div>
<div style="left:14px;top:621px;width:15px;height:20px;background:#d8d8d8"></div>
<div style="left:29px;top:621px;width:1px;height:20px;background:#808080"></div>
<div style="left:30px;top:621px;width:15px;height:20px;background:#ff0000"></div>
<div style="left:45px;top:621px;width:1px;height:20px;background:#808080"></div>
<div style="left:46px;top:621px;width:79px;height:20px;background:#fff"></div>
<div style="left:126px;top:621px;width:47px;height:20px;background:#fff"></div>
<div class="t" style="left:31px;top:625px;color:#fff;"><i class="w7">T</i></div>
<div class="t" style="left:47px;top:625px;color:#000;"><i class="w3">&nbsp;</i><i class="w3">&nbsp;</i><i class="w7">5</i><i class="w7">0</i><i class="w7">9</i></div>
<div class="t" style="left:165px;top:625px;color:#000;"><i class="w7">2</i></div>
<div style="left:14px;top:641px;width:159px;height:1px;background:#808080"></div>
<div class="t" style="left:74px;top:643px;color:#000030;"><i class="w9">C</i><i class="w4">r</i><i class="w7">e</i><i class="w7">d</i><i class="w3">i</i><i class="w3">t</i><i class="w7">s</i></div>
<div class="t" style="left:142px;top:647px;color:#000030;"><i class="w7">3</i><i class="w7">1</i><i class="w3">&nbsp;</i><i class="w3">/</i><i class="w3">&nbsp;</i><i class="w7">0</i></div>
<div style="left:173px;top:390px;width:16px;height:16px;background:#f0f0f0;border:1px solid;border-color:#f0f0f0 #000 #000 #f0f0f0;box-shadow:inset 1px 1px #fff,inset -1px -1px #a0a0a0;box-sizing:border-box"></div>
<svg style="position:absolute;left:177px;top:396px" width="7" height="4" shape-rendering="crispEdges"><path d="M3 0h1v1h1v1h1v1h1v1H0V3h1V2h1V1h1z" fill="#000"/></svg>
<div style="left:173px;top:406px;width:16px;height:201px;background:#d8d8d8;border:1px solid;border-color:#f0f0f0 #696969 #696969 #f0f0f0;box-shadow:inset 1px 1px #fff,inset -1px -1px #a0a0a0;box-sizing:border-box"></div>
<div style="left:173px;top:607px;width:16px;height:19px;background-color:#f0f0f0;background-image:repeating-conic-gradient(#c8c8c8 0 25%, #f4f4f4 0 50%);background-size:2px 2px"></div>
<div style="left:173px;top:626px;width:16px;height:16px;background:#f0f0f0;border:1px solid;border-color:#f0f0f0 #000 #000 #f0f0f0;box-shadow:inset 1px 1px #fff,inset -1px -1px #a0a0a0;box-sizing:border-box"></div>
<svg style="position:absolute;left:177px;top:632px" width="7" height="4" shape-rendering="crispEdges"><path d="M0 0h7v1H6v1H5v1H4v1H3V3H2V2H1V1H0z" fill="#000"/></svg>
<div style="left:196px;top:391px;width:1px;height:252px;background:#808080"></div>
<div style="left:196px;top:391px;width:160px;height:1px;background:#808080"></div>
<div style="left:197px;top:643px;width:159px;height:1px;background:#fff"></div>
<div style="left:197px;top:642px;width:159px;height:1px;background:#c0c0c0"></div>
<div class="t" style="left:198px;top:395px;color:#800000;"><i class="w7">T</i><i class="w7">a</i><i class="w7">s</i><i class="w7">k</i><i class="w3">&nbsp;</i><i class="w3">&nbsp;</i><i class="w7">7</i></div>
<div class="t" style="left:310px;top:395px;color:#800000;"><i class="w9">R</i><i class="w11">m</i><i class="w7">s</i><i class="w3">&nbsp;</i><i class="w7">1</i><i class="w7">2</i></div>
<div style="left:308px;top:392px;width:1px;height:250px;background:#808080"></div>
<div style="left:197px;top:410px;width:159px;height:1px;background:#808080"></div>
<div style="left:197px;top:410px;width:1px;height:1px;background:#fff"></div>
<div style="left:197px;top:411px;width:15px;height:20px;background:#d8d8d8"></div>
<div style="left:212px;top:411px;width:1px;height:20px;background:#808080"></div>
<div style="left:213px;top:411px;width:15px;height:20px;background:#ff0000"></div>
<div style="left:228px;top:411px;width:1px;height:20px;background:#808080"></div>
<div style="left:229px;top:411px;width:79px;height:20px;background:#fff"></div>
<div style="left:309px;top:411px;width:47px;height:20px;background:#fff"></div>
<div class="t" style="left:214px;top:415px;color:#fff;"><i class="w7">T</i></div>
<div class="t" style="left:230px;top:415px;color:#000;"><i class="w3">&nbsp;</i><i class="w3">&nbsp;</i><i class="w7">5</i><i class="w7">1</i><i class="w7">3</i></div>
<div class="t" style="left:348px;top:415px;color:#000;"><i class="w7">2</i></div>
<div style="left:197px;top:431px;width:159px;height:1px;background:#808080"></div>
<div style="left:197px;top:431px;width:1px;height:1px;background:#fff"></div>
<div style="left:197px;top:432px;width:15px;height:20px;background:#d8d8d8"></div>
<div style="left:212px;top:432px;width:1px;height:20px;background:#808080"></div>
<div style="left:213px;top:432px;width:15px;height:20px;background:#ff0000"></div>
<div style="left:228px;top:432px;width:1px;height:20px;background:#808080"></div>
<div style="left:229px;top:432px;width:79px;height:20px;background:#fff"></div>
<div style="left:309px;top:432px;width:47px;height:20px;background:#fff"></div>
<div class="t" style="left:214px;top:436px;color:#fff;"><i class="w7">T</i></div>
<div class="t" style="left:230px;top:436px;color:#000;"><i class="w3">&nbsp;</i><i class="w3">&nbsp;</i><i class="w7">5</i><i class="w7">1</i><i class="w7">5</i></div>
<div class="t" style="left:348px;top:436px;color:#000;"><i class="w7">2</i></div>
<div style="left:197px;top:452px;width:159px;height:1px;background:#808080"></div>
<div style="left:197px;top:452px;width:1px;height:1px;background:#fff"></div>
<div style="left:197px;top:453px;width:15px;height:20px;background:#d8d8d8"></div>
<div style="left:212px;top:453px;width:1px;height:20px;background:#808080"></div>
<div style="left:213px;top:453px;width:15px;height:20px;background:#ff0000"></div>
<div style="left:228px;top:453px;width:1px;height:20px;background:#808080"></div>
<div style="left:229px;top:453px;width:79px;height:20px;background:#fff"></div>
<div style="left:309px;top:453px;width:47px;height:20px;background:#fff"></div>
<div class="t" style="left:214px;top:457px;color:#fff;"><i class="w7">T</i></div>
<div class="t" style="left:230px;top:457px;color:#000;"><i class="w3">!</i><i class="w3">&nbsp;</i><i class="w7">5</i><i class="w7">1</i><i class="w7">7</i></div>
<div class="t" style="left:348px;top:457px;color:#000;"><i class="w7">2</i></div>
<div style="left:197px;top:473px;width:159px;height:1px;background:#808080"></div>
<div style="left:197px;top:473px;width:1px;height:1px;background:#fff"></div>
<div style="left:197px;top:474px;width:15px;height:20px;background:#d8d8d8"></div>
<div style="left:212px;top:474px;width:1px;height:20px;background:#808080"></div>
<div style="left:213px;top:474px;width:15px;height:20px;background:#ff0000"></div>
<div style="left:228px;top:474px;width:1px;height:20px;background:#808080"></div>
<div style="left:229px;top:474px;width:79px;height:20px;background:#fff"></div>
<div style="left:309px;top:474px;width:47px;height:20px;background:#fff"></div>
<div class="t" style="left:214px;top:478px;color:#fff;"><i class="w7">T</i></div>
<div class="t" style="left:230px;top:478px;color:#000;"><i class="w3">&nbsp;</i><i class="w3">&nbsp;</i><i class="w7">5</i><i class="w7">1</i><i class="w7">9</i></div>
<div class="t" style="left:348px;top:478px;color:#000;"><i class="w7">2</i></div>
<div style="left:197px;top:494px;width:159px;height:1px;background:#808080"></div>
<div style="left:197px;top:494px;width:1px;height:1px;background:#fff"></div>
<div style="left:197px;top:495px;width:15px;height:20px;background:#d8d8d8"></div>
<div style="left:212px;top:495px;width:1px;height:20px;background:#808080"></div>
<div style="left:213px;top:495px;width:15px;height:20px;background:#ff0000"></div>
<div style="left:228px;top:495px;width:1px;height:20px;background:#808080"></div>
<div style="left:229px;top:495px;width:79px;height:20px;background:#fff"></div>
<div style="left:309px;top:495px;width:47px;height:20px;background:#fff"></div>
<div class="t" style="left:214px;top:499px;color:#fff;"><i class="w7">T</i></div>
<div class="t" style="left:230px;top:499px;color:#000;"><i class="w3">&nbsp;</i><i class="w3">&nbsp;</i><i class="w7">5</i><i class="w7">2</i><i class="w7">1</i></div>
<div class="t" style="left:348px;top:499px;color:#000;"><i class="w7">2</i></div>
<div style="left:197px;top:515px;width:159px;height:1px;background:#808080"></div>
<div style="left:197px;top:515px;width:1px;height:1px;background:#fff"></div>
<div style="left:197px;top:516px;width:15px;height:20px;background:#d8d8d8"></div>
<div style="left:212px;top:516px;width:1px;height:20px;background:#808080"></div>
<div style="left:213px;top:516px;width:15px;height:20px;background:#ff0000"></div>
<div style="left:228px;top:516px;width:1px;height:20px;background:#808080"></div>
<div style="left:229px;top:516px;width:79px;height:20px;background:#fff"></div>
<div style="left:309px;top:516px;width:47px;height:20px;background:#fff"></div>
<div class="t" style="left:214px;top:520px;color:#fff;"><i class="w7">T</i></div>
<div class="t" style="left:230px;top:520px;color:#000;"><i class="w3">&nbsp;</i><i class="w3">&nbsp;</i><i class="w7">5</i><i class="w7">2</i><i class="w7">5</i></div>
<div class="t" style="left:348px;top:520px;color:#000;"><i class="w7">2</i></div>
<div style="left:197px;top:536px;width:159px;height:1px;background:#808080"></div>
<div style="left:197px;top:536px;width:1px;height:1px;background:#fff"></div>
<div style="left:197px;top:537px;width:15px;height:20px;background:#d8d8d8"></div>
<div style="left:212px;top:537px;width:1px;height:20px;background:#808080"></div>
<div style="left:213px;top:537px;width:15px;height:20px;background:#ff0000"></div>
<div style="left:228px;top:537px;width:1px;height:20px;background:#808080"></div>
<div style="left:229px;top:537px;width:79px;height:20px;background:#fff"></div>
<div style="left:309px;top:537px;width:47px;height:20px;background:#fff"></div>
<div class="t" style="left:214px;top:541px;color:#fff;"><i class="w7">T</i></div>
<div class="t" style="left:230px;top:541px;color:#000;"><i class="w3">&nbsp;</i><i class="w3">&nbsp;</i><i class="w7">5</i><i class="w7">2</i><i class="w7">7</i></div>
<div class="t" style="left:348px;top:541px;color:#000;"><i class="w7">2</i></div>
<div style="left:197px;top:557px;width:159px;height:1px;background:#808080"></div>
<div style="left:197px;top:557px;width:1px;height:1px;background:#fff"></div>
<div style="left:197px;top:558px;width:15px;height:20px;background:#d8d8d8"></div>
<div style="left:212px;top:558px;width:1px;height:20px;background:#808080"></div>
<div style="left:213px;top:558px;width:15px;height:20px;background:#ff0000"></div>
<div style="left:228px;top:558px;width:1px;height:20px;background:#808080"></div>
<div style="left:229px;top:558px;width:79px;height:20px;background:#fff"></div>
<div style="left:309px;top:558px;width:47px;height:20px;background:#fff"></div>
<div class="t" style="left:214px;top:562px;color:#fff;"><i class="w7">T</i></div>
<div class="t" style="left:230px;top:562px;color:#000;"><i class="w3">&nbsp;</i><i class="w3">&nbsp;</i><i class="w7">5</i><i class="w7">2</i><i class="w7">9</i></div>
<div class="t" style="left:348px;top:562px;color:#000;"><i class="w7">2</i></div>
<div style="left:197px;top:578px;width:159px;height:1px;background:#808080"></div>
<div style="left:197px;top:578px;width:1px;height:1px;background:#fff"></div>
<div style="left:197px;top:579px;width:15px;height:20px;background:#d8d8d8"></div>
<div style="left:212px;top:579px;width:1px;height:20px;background:#808080"></div>
<div style="left:213px;top:579px;width:15px;height:20px;background:#ff0000"></div>
<div style="left:228px;top:579px;width:1px;height:20px;background:#808080"></div>
<div style="left:229px;top:579px;width:79px;height:20px;background:#fff"></div>
<div style="left:309px;top:579px;width:47px;height:20px;background:#fff"></div>
<div class="t" style="left:214px;top:583px;color:#fff;"><i class="w7">T</i></div>
<div class="t" style="left:230px;top:583px;color:#000;"><i class="w3">&nbsp;</i><i class="w3">&nbsp;</i><i class="w7">5</i><i class="w7">3</i><i class="w7">1</i></div>
<div class="t" style="left:348px;top:583px;color:#000;"><i class="w7">2</i></div>
<div style="left:197px;top:599px;width:159px;height:1px;background:#808080"></div>
<div style="left:197px;top:599px;width:1px;height:1px;background:#fff"></div>
<div style="left:197px;top:600px;width:15px;height:20px;background:#d8d8d8"></div>
<div style="left:212px;top:600px;width:1px;height:20px;background:#808080"></div>
<div style="left:213px;top:600px;width:15px;height:20px;background:#ff0000"></div>
<div style="left:228px;top:600px;width:1px;height:20px;background:#808080"></div>
<div style="left:229px;top:600px;width:79px;height:20px;background:#fff"></div>
<div style="left:309px;top:600px;width:47px;height:20px;background:#fff"></div>
<div class="t" style="left:214px;top:604px;color:#fff;"><i class="w7">T</i></div>
<div class="t" style="left:230px;top:604px;color:#000;"><i class="w3">&nbsp;</i><i class="w3">&nbsp;</i><i class="w7">6</i><i class="w7">0</i><i class="w7">1</i></div>
<div class="t" style="left:348px;top:604px;color:#000;"><i class="w7">2</i></div>
<div style="left:197px;top:620px;width:159px;height:1px;background:#808080"></div>
<div style="left:197px;top:620px;width:1px;height:1px;background:#fff"></div>
<div style="left:197px;top:621px;width:15px;height:20px;background:#d8d8d8"></div>
<div style="left:212px;top:621px;width:1px;height:20px;background:#808080"></div>
<div style="left:213px;top:621px;width:15px;height:20px;background:#ff0000"></div>
<div style="left:228px;top:621px;width:1px;height:20px;background:#808080"></div>
<div style="left:229px;top:621px;width:79px;height:20px;background:#fff"></div>
<div style="left:309px;top:621px;width:47px;height:20px;background:#fff"></div>
<div class="t" style="left:214px;top:625px;color:#fff;"><i class="w7">T</i></div>
<div class="t" style="left:230px;top:625px;color:#000;"><i class="w3">!</i><i class="w3">&nbsp;</i><i class="w7">6</i><i class="w7">0</i><i class="w7">2</i></div>
<div class="t" style="left:348px;top:625px;color:#000;"><i class="w7">2</i></div>
<div style="left:197px;top:641px;width:159px;height:1px;background:#808080"></div>
<div class="t" style="left:251px;top:643px;color:#000030;"><i class="w9">C</i><i class="w4">r</i><i class="w7">e</i><i class="w7">d</i><i class="w3">i</i><i class="w3">t</i><i class="w7">s</i></div>
<div class="t" style="left:325px;top:647px;color:#000030;"><i class="w7">2</i><i class="w7">4</i><i class="w3">&nbsp;</i><i class="w3">/</i><i class="w3">&nbsp;</i><i class="w7">0</i></div>
<div style="left:356px;top:390px;width:16px;height:16px;background:#f0f0f0;border:1px solid;border-color:#f0f0f0 #000 #000 #f0f0f0;box-shadow:inset 1px 1px #fff,inset -1px -1px #a0a0a0;box-sizing:border-box"></div>
<svg style="position:absolute;left:360px;top:396px" width="7" height="4" shape-rendering="crispEdges"><path d="M3 0h1v1h1v1h1v1h1v1H0V3h1V2h1V1h1z" fill="#000"/></svg>
<div style="left:356px;top:406px;width:16px;height:201px;background:#d8d8d8;border:1px solid;border-color:#f0f0f0 #696969 #696969 #f0f0f0;box-shadow:inset 1px 1px #fff,inset -1px -1px #a0a0a0;box-sizing:border-box"></div>
<div style="left:356px;top:607px;width:16px;height:19px;background-color:#f0f0f0;background-image:repeating-conic-gradient(#c8c8c8 0 25%, #f4f4f4 0 50%);background-size:2px 2px"></div>
<div style="left:356px;top:626px;width:16px;height:16px;background:#f0f0f0;border:1px solid;border-color:#f0f0f0 #000 #000 #f0f0f0;box-shadow:inset 1px 1px #fff,inset -1px -1px #a0a0a0;box-sizing:border-box"></div>
<svg style="position:absolute;left:360px;top:632px" width="7" height="4" shape-rendering="crispEdges"><path d="M0 0h7v1H6v1H5v1H4v1H3V3H2V2H1V1H0z" fill="#000"/></svg>
<div style="left:379px;top:391px;width:1px;height:252px;background:#808080"></div>
<div style="left:379px;top:391px;width:160px;height:1px;background:#808080"></div>
<div style="left:380px;top:643px;width:159px;height:1px;background:#fff"></div>
<div style="left:380px;top:642px;width:159px;height:1px;background:#c0c0c0"></div>
<div class="t" style="left:381px;top:395px;color:#800000;"><i class="w7">T</i><i class="w7">a</i><i class="w7">s</i><i class="w7">k</i><i class="w3">&nbsp;</i><i class="w3">&nbsp;</i><i class="w7">8</i></div>
<div class="t" style="left:493px;top:395px;color:#800000;"><i class="w9">R</i><i class="w11">m</i><i class="w7">s</i><i class="w3">&nbsp;</i><i class="w7">1</i><i class="w7">2</i></div>
<div style="left:491px;top:392px;width:1px;height:250px;background:#808080"></div>
<div style="left:380px;top:410px;width:159px;height:1px;background:#808080"></div>
<div style="left:380px;top:410px;width:1px;height:1px;background:#fff"></div>
<div style="left:380px;top:411px;width:15px;height:20px;background:#d8d8d8"></div>
<div style="left:395px;top:411px;width:1px;height:20px;background:#808080"></div>
<div style="left:396px;top:411px;width:15px;height:20px;background:#ff0000"></div>
<div style="left:411px;top:411px;width:1px;height:20px;background:#808080"></div>
<div style="left:412px;top:411px;width:79px;height:20px;background:#fff"></div>
<div style="left:492px;top:411px;width:47px;height:20px;background:#fff"></div>
<div class="t" style="left:397px;top:415px;color:#fff;"><i class="w7">T</i></div>
<div class="t" style="left:413px;top:415px;color:#000;"><i class="w3">&nbsp;</i><i class="w3">&nbsp;</i><i class="w7">6</i><i class="w7">0</i><i class="w7">6</i></div>
<div class="t" style="left:531px;top:415px;color:#000;"><i class="w7">2</i></div>
<div style="left:380px;top:431px;width:159px;height:1px;background:#808080"></div>
<div style="left:380px;top:431px;width:1px;height:1px;background:#fff"></div>
<div style="left:380px;top:432px;width:15px;height:20px;background:#d8d8d8"></div>
<div style="left:395px;top:432px;width:1px;height:20px;background:#808080"></div>
<div style="left:396px;top:432px;width:15px;height:20px;background:#ff0000"></div>
<div style="left:411px;top:432px;width:1px;height:20px;background:#808080"></div>
<div style="left:412px;top:432px;width:79px;height:20px;background:#fff"></div>
<div style="left:492px;top:432px;width:47px;height:20px;background:#fff"></div>
<div class="t" style="left:397px;top:436px;color:#fff;"><i class="w7">T</i></div>
<div class="t" style="left:413px;top:436px;color:#000;"><i class="w3">&nbsp;</i><i class="w3">&nbsp;</i><i class="w7">6</i><i class="w7">0</i><i class="w7">8</i></div>
<div class="t" style="left:531px;top:436px;color:#000;"><i class="w7">2</i></div>
<div style="left:380px;top:452px;width:159px;height:1px;background:#808080"></div>
<div style="left:380px;top:452px;width:1px;height:1px;background:#fff"></div>
<div style="left:380px;top:453px;width:15px;height:20px;background:#d8d8d8"></div>
<div style="left:395px;top:453px;width:1px;height:20px;background:#808080"></div>
<div style="left:396px;top:453px;width:15px;height:20px;background:#ff0000"></div>
<div style="left:411px;top:453px;width:1px;height:20px;background:#808080"></div>
<div style="left:412px;top:453px;width:79px;height:20px;background:#fff"></div>
<div style="left:492px;top:453px;width:47px;height:20px;background:#fff"></div>
<div class="t" style="left:397px;top:457px;color:#fff;"><i class="w7">T</i></div>
<div class="t" style="left:413px;top:457px;color:#000;"><i class="w3">&nbsp;</i><i class="w3">&nbsp;</i><i class="w7">6</i><i class="w7">1</i><i class="w7">0</i></div>
<div class="t" style="left:531px;top:457px;color:#000;"><i class="w7">2</i></div>
<div style="left:380px;top:473px;width:159px;height:1px;background:#808080"></div>
<div style="left:380px;top:473px;width:1px;height:1px;background:#fff"></div>
<div style="left:380px;top:474px;width:15px;height:20px;background:#d8d8d8"></div>
<div style="left:395px;top:474px;width:1px;height:20px;background:#808080"></div>
<div style="left:396px;top:474px;width:15px;height:20px;background:#ff0000"></div>
<div style="left:411px;top:474px;width:1px;height:20px;background:#808080"></div>
<div style="left:412px;top:474px;width:79px;height:20px;background:#fff"></div>
<div style="left:492px;top:474px;width:47px;height:20px;background:#fff"></div>
<div class="t" style="left:397px;top:478px;color:#fff;"><i class="w7">T</i></div>
<div class="t" style="left:413px;top:478px;color:#000;"><i class="w3">&nbsp;</i><i class="w3">&nbsp;</i><i class="w7">7</i><i class="w7">0</i><i class="w7">1</i></div>
<div class="t" style="left:531px;top:478px;color:#000;"><i class="w7">2</i></div>
<div style="left:380px;top:494px;width:159px;height:1px;background:#808080"></div>
<div style="left:380px;top:494px;width:1px;height:1px;background:#fff"></div>
<div style="left:380px;top:495px;width:15px;height:20px;background:#d8d8d8"></div>
<div style="left:395px;top:495px;width:1px;height:20px;background:#808080"></div>
<div style="left:396px;top:495px;width:15px;height:20px;background:#ff0000"></div>
<div style="left:411px;top:495px;width:1px;height:20px;background:#808080"></div>
<div style="left:412px;top:495px;width:79px;height:20px;background:#fff"></div>
<div style="left:492px;top:495px;width:47px;height:20px;background:#fff"></div>
<div class="t" style="left:397px;top:499px;color:#fff;"><i class="w7">T</i></div>
<div class="t" style="left:413px;top:499px;color:#000;"><i class="w3">&nbsp;</i><i class="w3">&nbsp;</i><i class="w7">7</i><i class="w7">0</i><i class="w7">2</i></div>
<div class="t" style="left:531px;top:499px;color:#000;"><i class="w7">2</i></div>
<div style="left:380px;top:515px;width:159px;height:1px;background:#808080"></div>
<div style="left:380px;top:515px;width:1px;height:1px;background:#fff"></div>
<div style="left:380px;top:516px;width:15px;height:20px;background:#d8d8d8"></div>
<div style="left:395px;top:516px;width:1px;height:20px;background:#808080"></div>
<div style="left:396px;top:516px;width:15px;height:20px;background:#ff0000"></div>
<div style="left:411px;top:516px;width:1px;height:20px;background:#808080"></div>
<div style="left:412px;top:516px;width:79px;height:20px;background:#fff"></div>
<div style="left:492px;top:516px;width:47px;height:20px;background:#fff"></div>
<div class="t" style="left:397px;top:520px;color:#fff;"><i class="w7">T</i></div>
<div class="t" style="left:413px;top:520px;color:#000;"><i class="w3">&nbsp;</i><i class="w3">&nbsp;</i><i class="w7">7</i><i class="w7">0</i><i class="w7">3</i></div>
<div class="t" style="left:531px;top:520px;color:#000;"><i class="w7">2</i></div>
<div style="left:380px;top:536px;width:159px;height:1px;background:#808080"></div>
<div style="left:380px;top:536px;width:1px;height:1px;background:#fff"></div>
<div style="left:380px;top:537px;width:15px;height:20px;background:#d8d8d8"></div>
<div style="left:395px;top:537px;width:1px;height:20px;background:#808080"></div>
<div style="left:396px;top:537px;width:15px;height:20px;background:#ff0000"></div>
<div style="left:411px;top:537px;width:1px;height:20px;background:#808080"></div>
<div style="left:412px;top:537px;width:79px;height:20px;background:#fff"></div>
<div style="left:492px;top:537px;width:47px;height:20px;background:#fff"></div>
<div class="t" style="left:397px;top:541px;color:#fff;"><i class="w7">T</i></div>
<div class="t" style="left:413px;top:541px;color:#000;"><i class="w3">&nbsp;</i><i class="w3">&nbsp;</i><i class="w7">7</i><i class="w7">0</i><i class="w7">4</i></div>
<div class="t" style="left:531px;top:541px;color:#000;"><i class="w7">2</i></div>
<div style="left:380px;top:557px;width:159px;height:1px;background:#808080"></div>
<div style="left:380px;top:557px;width:1px;height:1px;background:#fff"></div>
<div style="left:380px;top:558px;width:15px;height:20px;background:#d8d8d8"></div>
<div style="left:395px;top:558px;width:1px;height:20px;background:#808080"></div>
<div style="left:396px;top:558px;width:15px;height:20px;background:#ff0000"></div>
<div style="left:411px;top:558px;width:1px;height:20px;background:#808080"></div>
<div style="left:412px;top:558px;width:79px;height:20px;background:#fff"></div>
<div style="left:492px;top:558px;width:47px;height:20px;background:#fff"></div>
<div class="t" style="left:397px;top:562px;color:#fff;"><i class="w7">T</i></div>
<div class="t" style="left:413px;top:562px;color:#000;"><i class="w3">&nbsp;</i><i class="w3">&nbsp;</i><i class="w7">7</i><i class="w7">0</i><i class="w7">5</i></div>
<div class="t" style="left:531px;top:562px;color:#000;"><i class="w7">2</i></div>
<div style="left:380px;top:578px;width:159px;height:1px;background:#808080"></div>
<div style="left:380px;top:578px;width:1px;height:1px;background:#fff"></div>
<div style="left:380px;top:579px;width:15px;height:20px;background:#d8d8d8"></div>
<div style="left:395px;top:579px;width:1px;height:20px;background:#808080"></div>
<div style="left:396px;top:579px;width:15px;height:20px;background:#ff0000"></div>
<div style="left:411px;top:579px;width:1px;height:20px;background:#808080"></div>
<div style="left:412px;top:579px;width:79px;height:20px;background:#fff"></div>
<div style="left:492px;top:579px;width:47px;height:20px;background:#fff"></div>
<div class="t" style="left:397px;top:583px;color:#fff;"><i class="w7">T</i></div>
<div class="t" style="left:413px;top:583px;color:#000;"><i class="w3">&nbsp;</i><i class="w3">&nbsp;</i><i class="w7">7</i><i class="w7">0</i><i class="w7">7</i></div>
<div class="t" style="left:531px;top:583px;color:#000;"><i class="w7">2</i></div>
<div style="left:380px;top:599px;width:159px;height:1px;background:#808080"></div>
<div style="left:380px;top:599px;width:1px;height:1px;background:#fff"></div>
<div style="left:380px;top:600px;width:15px;height:20px;background:#d8d8d8"></div>
<div style="left:395px;top:600px;width:1px;height:20px;background:#808080"></div>
<div style="left:396px;top:600px;width:15px;height:20px;background:#ff0000"></div>
<div style="left:411px;top:600px;width:1px;height:20px;background:#808080"></div>
<div style="left:412px;top:600px;width:79px;height:20px;background:#fff"></div>
<div style="left:492px;top:600px;width:47px;height:20px;background:#fff"></div>
<div class="t" style="left:397px;top:604px;color:#fff;"><i class="w7">T</i></div>
<div class="t" style="left:413px;top:604px;color:#000;"><i class="w3">&nbsp;</i><i class="w3">&nbsp;</i><i class="w7">7</i><i class="w7">0</i><i class="w7">9</i></div>
<div class="t" style="left:531px;top:604px;color:#000;"><i class="w7">2</i></div>
<div style="left:380px;top:620px;width:159px;height:1px;background:#808080"></div>
<div style="left:380px;top:620px;width:1px;height:1px;background:#fff"></div>
<div style="left:380px;top:621px;width:15px;height:20px;background:#d8d8d8"></div>
<div style="left:395px;top:621px;width:1px;height:20px;background:#808080"></div>
<div style="left:396px;top:621px;width:15px;height:20px;background:#ff0000"></div>
<div style="left:411px;top:621px;width:1px;height:20px;background:#808080"></div>
<div style="left:412px;top:621px;width:79px;height:20px;background:#fff"></div>
<div style="left:492px;top:621px;width:47px;height:20px;background:#fff"></div>
<div class="t" style="left:397px;top:625px;color:#fff;"><i class="w7">T</i></div>
<div class="t" style="left:413px;top:625px;color:#000;"><i class="w3">&nbsp;</i><i class="w3">&nbsp;</i><i class="w7">7</i><i class="w7">1</i><i class="w7">1</i></div>
<div class="t" style="left:531px;top:625px;color:#000;"><i class="w7">2</i></div>
<div style="left:380px;top:641px;width:159px;height:1px;background:#808080"></div>
<div class="t" style="left:433px;top:643px;color:#000030;"><i class="w9">C</i><i class="w4">r</i><i class="w7">e</i><i class="w7">d</i><i class="w3">i</i><i class="w3">t</i><i class="w7">s</i></div>
<div class="t" style="left:508px;top:647px;color:#000030;"><i class="w7">2</i><i class="w7">4</i><i class="w3">&nbsp;</i><i class="w3">/</i><i class="w3">&nbsp;</i><i class="w7">0</i></div>
<div style="left:539px;top:390px;width:16px;height:16px;background:#f0f0f0;border:1px solid;border-color:#f0f0f0 #000 #000 #f0f0f0;box-shadow:inset 1px 1px #fff,inset -1px -1px #a0a0a0;box-sizing:border-box"></div>
<svg style="position:absolute;left:543px;top:396px" width="7" height="4" shape-rendering="crispEdges"><path d="M3 0h1v1h1v1h1v1h1v1H0V3h1V2h1V1h1z" fill="#000"/></svg>
<div style="left:539px;top:406px;width:16px;height:201px;background:#d8d8d8;border:1px solid;border-color:#f0f0f0 #696969 #696969 #f0f0f0;box-shadow:inset 1px 1px #fff,inset -1px -1px #a0a0a0;box-sizing:border-box"></div>
<div style="left:539px;top:607px;width:16px;height:19px;background-color:#f0f0f0;background-image:repeating-conic-gradient(#c8c8c8 0 25%, #f4f4f4 0 50%);background-size:2px 2px"></div>
<div style="left:539px;top:626px;width:16px;height:16px;background:#f0f0f0;border:1px solid;border-color:#f0f0f0 #000 #000 #f0f0f0;box-shadow:inset 1px 1px #fff,inset -1px -1px #a0a0a0;box-sizing:border-box"></div>
<svg style="position:absolute;left:543px;top:632px" width="7" height="4" shape-rendering="crispEdges"><path d="M0 0h7v1H6v1H5v1H4v1H3V3H2V2H1V1H0z" fill="#000"/></svg>
<div style="left:561px;top:391px;width:1px;height:252px;background:#808080"></div>
<div style="left:561px;top:391px;width:160px;height:1px;background:#808080"></div>
<div style="left:562px;top:643px;width:159px;height:1px;background:#fff"></div>
<div style="left:562px;top:642px;width:159px;height:1px;background:#c0c0c0"></div>
<div class="t" style="left:563px;top:395px;color:#800000;"><i class="w7">T</i><i class="w7">a</i><i class="w7">s</i><i class="w7">k</i><i class="w3">&nbsp;</i><i class="w3">&nbsp;</i><i class="w7">9</i></div>
<div class="t" style="left:675px;top:395px;color:#800000;"><i class="w9">R</i><i class="w11">m</i><i class="w7">s</i><i class="w3">&nbsp;</i><i class="w7">1</i><i class="w7">1</i></div>
<div style="left:673px;top:392px;width:1px;height:250px;background:#808080"></div>
<div style="left:562px;top:410px;width:159px;height:1px;background:#808080"></div>
<div style="left:562px;top:410px;width:1px;height:1px;background:#fff"></div>
<div style="left:562px;top:411px;width:15px;height:20px;background:#d8d8d8"></div>
<div style="left:577px;top:411px;width:1px;height:20px;background:#808080"></div>
<div style="left:578px;top:411px;width:15px;height:20px;background:#ff0000"></div>
<div style="left:593px;top:411px;width:1px;height:20px;background:#808080"></div>
<div style="left:594px;top:411px;width:79px;height:20px;background:#fff"></div>
<div style="left:674px;top:411px;width:47px;height:20px;background:#fff"></div>
<div class="t" style="left:579px;top:415px;color:#fff;"><i class="w7">T</i></div>
<div class="t" style="left:595px;top:415px;color:#000;"><i class="w3">&nbsp;</i><i class="w3">&nbsp;</i><i class="w7">7</i><i class="w7">1</i><i class="w7">5</i></div>
<div class="t" style="left:713px;top:415px;color:#000;"><i class="w7">2</i></div>
<div style="left:562px;top:431px;width:159px;height:1px;background:#808080"></div>
<div style="left:562px;top:431px;width:1px;height:1px;background:#fff"></div>
<div style="left:562px;top:432px;width:15px;height:20px;background:#d8d8d8"></div>
<div style="left:577px;top:432px;width:1px;height:20px;background:#808080"></div>
<div style="left:578px;top:432px;width:15px;height:20px;background:#ff0000"></div>
<div style="left:593px;top:432px;width:1px;height:20px;background:#808080"></div>
<div style="left:594px;top:432px;width:79px;height:20px;background:#fff"></div>
<div style="left:674px;top:432px;width:47px;height:20px;background:#fff"></div>
<div class="t" style="left:579px;top:436px;color:#fff;"><i class="w7">T</i></div>
<div class="t" style="left:595px;top:436px;color:#000;"><i class="w3">&nbsp;</i><i class="w3">&nbsp;</i><i class="w7">8</i><i class="w7">0</i><i class="w7">1</i></div>
<div class="t" style="left:713px;top:436px;color:#000;"><i class="w7">2</i></div>
<div style="left:562px;top:452px;width:159px;height:1px;background:#808080"></div>
<div style="left:562px;top:452px;width:1px;height:1px;background:#fff"></div>
<div style="left:562px;top:453px;width:15px;height:20px;background:#d8d8d8"></div>
<div style="left:577px;top:453px;width:1px;height:20px;background:#808080"></div>
<div style="left:578px;top:453px;width:15px;height:20px;background:#ff0000"></div>
<div style="left:593px;top:453px;width:1px;height:20px;background:#808080"></div>
<div style="left:594px;top:453px;width:79px;height:20px;background:#fff"></div>
<div style="left:674px;top:453px;width:47px;height:20px;background:#fff"></div>
<div class="t" style="left:579px;top:457px;color:#fff;"><i class="w7">T</i></div>
<div class="t" style="left:595px;top:457px;color:#000;"><i class="w3">&nbsp;</i><i class="w3">&nbsp;</i><i class="w7">8</i><i class="w7">0</i><i class="w7">2</i></div>
<div class="t" style="left:713px;top:457px;color:#000;"><i class="w7">2</i></div>
<div style="left:562px;top:473px;width:159px;height:1px;background:#808080"></div>
<div style="left:562px;top:473px;width:1px;height:1px;background:#fff"></div>
<div style="left:562px;top:474px;width:15px;height:20px;background:#d8d8d8"></div>
<div style="left:577px;top:474px;width:1px;height:20px;background:#808080"></div>
<div style="left:578px;top:474px;width:15px;height:20px;background:#ff0000"></div>
<div style="left:593px;top:474px;width:1px;height:20px;background:#808080"></div>
<div style="left:594px;top:474px;width:79px;height:20px;background:#fff"></div>
<div style="left:674px;top:474px;width:47px;height:20px;background:#fff"></div>
<div class="t" style="left:579px;top:478px;color:#fff;"><i class="w7">T</i></div>
<div class="t" style="left:595px;top:478px;color:#000;"><i class="w3">&nbsp;</i><i class="w3">&nbsp;</i><i class="w7">8</i><i class="w7">0</i><i class="w7">3</i></div>
<div class="t" style="left:713px;top:478px;color:#000;"><i class="w7">2</i></div>
<div style="left:562px;top:494px;width:159px;height:1px;background:#808080"></div>
<div style="left:562px;top:494px;width:1px;height:1px;background:#fff"></div>
<div style="left:562px;top:495px;width:15px;height:20px;background:#d8d8d8"></div>
<div style="left:577px;top:495px;width:1px;height:20px;background:#808080"></div>
<div style="left:578px;top:495px;width:15px;height:20px;background:#ff0000"></div>
<div style="left:593px;top:495px;width:1px;height:20px;background:#808080"></div>
<div style="left:594px;top:495px;width:79px;height:20px;background:#fff"></div>
<div style="left:674px;top:495px;width:47px;height:20px;background:#fff"></div>
<div class="t" style="left:579px;top:499px;color:#fff;"><i class="w7">T</i></div>
<div class="t" style="left:595px;top:499px;color:#000;"><i class="w3">&nbsp;</i><i class="w3">&nbsp;</i><i class="w7">8</i><i class="w7">0</i><i class="w7">4</i></div>
<div class="t" style="left:713px;top:499px;color:#000;"><i class="w7">2</i></div>
<div style="left:562px;top:515px;width:159px;height:1px;background:#808080"></div>
<div style="left:562px;top:515px;width:1px;height:1px;background:#fff"></div>
<div style="left:562px;top:516px;width:15px;height:20px;background:#d8d8d8"></div>
<div style="left:577px;top:516px;width:1px;height:20px;background:#808080"></div>
<div style="left:578px;top:516px;width:15px;height:20px;background:#ff0000"></div>
<div style="left:593px;top:516px;width:1px;height:20px;background:#808080"></div>
<div style="left:594px;top:516px;width:79px;height:20px;background:#fff"></div>
<div style="left:674px;top:516px;width:47px;height:20px;background:#fff"></div>
<div class="t" style="left:579px;top:520px;color:#fff;"><i class="w7">T</i></div>
<div class="t" style="left:595px;top:520px;color:#000;"><i class="w3">&nbsp;</i><i class="w3">&nbsp;</i><i class="w7">8</i><i class="w7">0</i><i class="w7">5</i></div>
<div class="t" style="left:713px;top:520px;color:#000;"><i class="w7">2</i></div>
<div style="left:562px;top:536px;width:159px;height:1px;background:#808080"></div>
<div style="left:562px;top:536px;width:1px;height:1px;background:#fff"></div>
<div style="left:562px;top:537px;width:15px;height:20px;background:#d8d8d8"></div>
<div style="left:577px;top:537px;width:1px;height:20px;background:#808080"></div>
<div style="left:578px;top:537px;width:15px;height:20px;background:#ff0000"></div>
<div style="left:593px;top:537px;width:1px;height:20px;background:#808080"></div>
<div style="left:594px;top:537px;width:79px;height:20px;background:#fff"></div>
<div style="left:674px;top:537px;width:47px;height:20px;background:#fff"></div>
<div class="t" style="left:579px;top:541px;color:#fff;"><i class="w7">T</i></div>
<div class="t" style="left:595px;top:541px;color:#000;"><i class="w3">&nbsp;</i><i class="w3">&nbsp;</i><i class="w7">8</i><i class="w7">0</i><i class="w7">6</i></div>
<div class="t" style="left:713px;top:541px;color:#000;"><i class="w7">2</i></div>
<div style="left:562px;top:557px;width:159px;height:1px;background:#808080"></div>
<div style="left:562px;top:557px;width:1px;height:1px;background:#fff"></div>
<div style="left:562px;top:558px;width:15px;height:20px;background:#d8d8d8"></div>
<div style="left:577px;top:558px;width:1px;height:20px;background:#808080"></div>
<div style="left:578px;top:558px;width:15px;height:20px;background:#ff0000"></div>
<div style="left:593px;top:558px;width:1px;height:20px;background:#808080"></div>
<div style="left:594px;top:558px;width:79px;height:20px;background:#fff"></div>
<div style="left:674px;top:558px;width:47px;height:20px;background:#fff"></div>
<div class="t" style="left:579px;top:562px;color:#fff;"><i class="w7">T</i></div>
<div class="t" style="left:595px;top:562px;color:#000;"><i class="w3">&nbsp;</i><i class="w3">&nbsp;</i><i class="w7">8</i><i class="w7">0</i><i class="w7">7</i></div>
<div class="t" style="left:713px;top:562px;color:#000;"><i class="w7">2</i></div>
<div style="left:562px;top:578px;width:159px;height:1px;background:#808080"></div>
<div style="left:562px;top:578px;width:1px;height:1px;background:#fff"></div>
<div style="left:562px;top:579px;width:15px;height:20px;background:#d8d8d8"></div>
<div style="left:577px;top:579px;width:1px;height:20px;background:#808080"></div>
<div style="left:578px;top:579px;width:15px;height:20px;background:#ff0000"></div>
<div style="left:593px;top:579px;width:1px;height:20px;background:#808080"></div>
<div style="left:594px;top:579px;width:79px;height:20px;background:#fff"></div>
<div style="left:674px;top:579px;width:47px;height:20px;background:#fff"></div>
<div class="t" style="left:579px;top:583px;color:#fff;"><i class="w7">T</i></div>
<div class="t" style="left:595px;top:583px;color:#000;"><i class="w3">&nbsp;</i><i class="w3">&nbsp;</i><i class="w7">8</i><i class="w7">0</i><i class="w7">8</i></div>
<div class="t" style="left:713px;top:583px;color:#000;"><i class="w7">2</i></div>
<div style="left:562px;top:599px;width:159px;height:1px;background:#808080"></div>
<div style="left:562px;top:599px;width:1px;height:1px;background:#fff"></div>
<div style="left:562px;top:600px;width:15px;height:20px;background:#d8d8d8"></div>
<div style="left:577px;top:600px;width:1px;height:20px;background:#808080"></div>
<div style="left:578px;top:600px;width:15px;height:20px;background:#ff0000"></div>
<div style="left:593px;top:600px;width:1px;height:20px;background:#808080"></div>
<div style="left:594px;top:600px;width:79px;height:20px;background:#fff"></div>
<div style="left:674px;top:600px;width:47px;height:20px;background:#fff"></div>
<div class="t" style="left:579px;top:604px;color:#fff;"><i class="w7">T</i></div>
<div class="t" style="left:595px;top:604px;color:#000;"><i class="w3">&nbsp;</i><i class="w3">&nbsp;</i><i class="w7">8</i><i class="w7">0</i><i class="w7">9</i></div>
<div class="t" style="left:713px;top:604px;color:#000;"><i class="w7">2</i></div>
<div style="left:562px;top:620px;width:159px;height:1px;background:#808080"></div>
<div style="left:562px;top:620px;width:1px;height:1px;background:#fff"></div>
<div style="left:562px;top:621px;width:15px;height:20px;background:#d8d8d8"></div>
<div style="left:577px;top:621px;width:1px;height:20px;background:#808080"></div>
<div style="left:578px;top:621px;width:15px;height:20px;background:#ff0000"></div>
<div style="left:593px;top:621px;width:1px;height:20px;background:#808080"></div>
<div style="left:594px;top:621px;width:79px;height:20px;background:#fff"></div>
<div style="left:674px;top:621px;width:47px;height:20px;background:#fff"></div>
<div class="t" style="left:579px;top:625px;color:#fff;"><i class="w7">T</i></div>
<div class="t" style="left:595px;top:625px;color:#000;"><i class="w3">&nbsp;</i><i class="w3">&nbsp;</i><i class="w7">8</i><i class="w7">1</i><i class="w7">0</i></div>
<div class="t" style="left:713px;top:625px;color:#000;"><i class="w7">2</i></div>
<div style="left:562px;top:641px;width:159px;height:1px;background:#808080"></div>
<div class="t" style="left:616px;top:643px;color:#000030;"><i class="w9">C</i><i class="w4">r</i><i class="w7">e</i><i class="w7">d</i><i class="w3">i</i><i class="w3">t</i><i class="w7">s</i></div>
<div class="t" style="left:690px;top:647px;color:#000030;"><i class="w7">2</i><i class="w7">2</i><i class="w3">&nbsp;</i><i class="w3">/</i><i class="w3">&nbsp;</i><i class="w7">0</i></div>
<div style="left:721px;top:390px;width:16px;height:16px;background:#f0f0f0;border:1px solid;border-color:#f0f0f0 #000 #000 #f0f0f0;box-shadow:inset 1px 1px #fff,inset -1px -1px #a0a0a0;box-sizing:border-box"></div>
<svg style="position:absolute;left:725px;top:396px" width="7" height="4" shape-rendering="crispEdges"><path d="M3 0h1v1h1v1h1v1h1v1H0V3h1V2h1V1h1z" fill="#000"/></svg>
<div style="left:721px;top:406px;width:16px;height:220px;background:#d8d8d8;border:1px solid;border-color:#f0f0f0 #696969 #696969 #f0f0f0;box-shadow:inset 1px 1px #fff,inset -1px -1px #a0a0a0;box-sizing:border-box"></div>
<div style="left:721px;top:626px;width:16px;height:16px;background:#f0f0f0;border:1px solid;border-color:#f0f0f0 #000 #000 #f0f0f0;box-shadow:inset 1px 1px #fff,inset -1px -1px #a0a0a0;box-sizing:border-box"></div>
<svg style="position:absolute;left:725px;top:632px" width="7" height="4" shape-rendering="crispEdges"><path d="M0 0h7v1H6v1H5v1H4v1H3V3H2V2H1V1H0z" fill="#000"/></svg>
<div style="left:744px;top:391px;width:1px;height:252px;background:#808080"></div>
<div style="left:744px;top:391px;width:160px;height:1px;background:#808080"></div>
<div style="left:745px;top:643px;width:159px;height:1px;background:#fff"></div>
<div style="left:745px;top:642px;width:159px;height:1px;background:#c0c0c0"></div>
<div class="t" style="left:746px;top:395px;color:#800000;"><i class="w7">F</i><i class="w3">l</i><i class="w7">o</i><i class="w7">a</i><i class="w3">t</i><i class="w3">&nbsp;</i><i class="w7">T</i><i class="w7">a</i><i class="w7">s</i><i class="w7">k</i><i class="w7">s</i><i class="w7">h</i><i class="w7">e</i><i class="w7">e</i><i class="w3">t</i></div>
<div class="t" style="left:858px;top:395px;color:#800000;"><i class="w9">R</i><i class="w11">m</i><i class="w7">s</i><i class="w3">&nbsp;</i><i class="w7">0</i></div>
<div style="left:856px;top:392px;width:1px;height:250px;background:#808080"></div>
<div style="left:745px;top:410px;width:159px;height:1px;background:#808080"></div>
<div style="left:745px;top:410px;width:1px;height:1px;background:#fff"></div>
<div style="left:745px;top:411px;width:159px;height:20px;background:#c0ffc0"></div>
<div style="left:760px;top:411px;width:1px;height:20px;background:#808080"></div>
<div style="left:776px;top:411px;width:1px;height:20px;background:#808080"></div>
<div style="left:856px;top:411px;width:1px;height:20px;background:#808080"></div>
<div style="left:745px;top:431px;width:159px;height:1px;background:#808080"></div>
<div style="left:745px;top:431px;width:1px;height:1px;background:#fff"></div>
<div style="left:745px;top:432px;width:159px;height:20px;background:#c0ffc0"></div>
<div style="left:760px;top:432px;width:1px;height:20px;background:#808080"></div>
<div style="left:776px;top:432px;width:1px;height:20px;background:#808080"></div>
<div style="left:856px;top:432px;width:1px;height:20px;background:#808080"></div>
<div style="left:745px;top:452px;width:159px;height:1px;background:#808080"></div>
<div style="left:745px;top:452px;width:1px;height:1px;background:#fff"></div>
<div style="left:745px;top:453px;width:159px;height:20px;background:#c0ffc0"></div>
<div style="left:760px;top:453px;width:1px;height:20px;background:#808080"></div>
<div style="left:776px;top:453px;width:1px;height:20px;background:#808080"></div>
<div style="left:856px;top:453px;width:1px;height:20px;background:#808080"></div>
<div style="left:745px;top:473px;width:159px;height:1px;background:#808080"></div>
<div style="left:745px;top:473px;width:1px;height:1px;background:#fff"></div>
<div style="left:745px;top:474px;width:159px;height:20px;background:#c0ffc0"></div>
<div style="left:760px;top:474px;width:1px;height:20px;background:#808080"></div>
<div style="left:776px;top:474px;width:1px;height:20px;background:#808080"></div>
<div style="left:856px;top:474px;width:1px;height:20px;background:#808080"></div>
<div style="left:745px;top:494px;width:159px;height:1px;background:#808080"></div>
<div style="left:745px;top:494px;width:1px;height:1px;background:#fff"></div>
<div style="left:745px;top:495px;width:159px;height:20px;background:#c0ffc0"></div>
<div style="left:760px;top:495px;width:1px;height:20px;background:#808080"></div>
<div style="left:776px;top:495px;width:1px;height:20px;background:#808080"></div>
<div style="left:856px;top:495px;width:1px;height:20px;background:#808080"></div>
<div style="left:745px;top:515px;width:159px;height:1px;background:#808080"></div>
<div style="left:745px;top:515px;width:1px;height:1px;background:#fff"></div>
<div style="left:745px;top:516px;width:159px;height:20px;background:#c0ffc0"></div>
<div style="left:760px;top:516px;width:1px;height:20px;background:#808080"></div>
<div style="left:776px;top:516px;width:1px;height:20px;background:#808080"></div>
<div style="left:856px;top:516px;width:1px;height:20px;background:#808080"></div>
<div style="left:745px;top:536px;width:159px;height:1px;background:#808080"></div>
<div style="left:745px;top:536px;width:1px;height:1px;background:#fff"></div>
<div style="left:745px;top:537px;width:159px;height:20px;background:#c0ffc0"></div>
<div style="left:760px;top:537px;width:1px;height:20px;background:#808080"></div>
<div style="left:776px;top:537px;width:1px;height:20px;background:#808080"></div>
<div style="left:856px;top:537px;width:1px;height:20px;background:#808080"></div>
<div style="left:745px;top:557px;width:159px;height:1px;background:#808080"></div>
<div style="left:745px;top:557px;width:1px;height:1px;background:#fff"></div>
<div style="left:745px;top:558px;width:159px;height:20px;background:#c0ffc0"></div>
<div style="left:760px;top:558px;width:1px;height:20px;background:#808080"></div>
<div style="left:776px;top:558px;width:1px;height:20px;background:#808080"></div>
<div style="left:856px;top:558px;width:1px;height:20px;background:#808080"></div>
<div style="left:745px;top:578px;width:159px;height:1px;background:#808080"></div>
<div style="left:745px;top:578px;width:1px;height:1px;background:#fff"></div>
<div style="left:745px;top:579px;width:159px;height:20px;background:#c0ffc0"></div>
<div style="left:760px;top:579px;width:1px;height:20px;background:#808080"></div>
<div style="left:776px;top:579px;width:1px;height:20px;background:#808080"></div>
<div style="left:856px;top:579px;width:1px;height:20px;background:#808080"></div>
<div style="left:745px;top:599px;width:159px;height:1px;background:#808080"></div>
<div style="left:745px;top:599px;width:1px;height:1px;background:#fff"></div>
<div style="left:745px;top:600px;width:159px;height:20px;background:#c0ffc0"></div>
<div style="left:760px;top:600px;width:1px;height:20px;background:#808080"></div>
<div style="left:776px;top:600px;width:1px;height:20px;background:#808080"></div>
<div style="left:856px;top:600px;width:1px;height:20px;background:#808080"></div>
<div style="left:745px;top:620px;width:159px;height:1px;background:#808080"></div>
<div style="left:745px;top:620px;width:1px;height:1px;background:#fff"></div>
<div style="left:745px;top:621px;width:159px;height:20px;background:#c0ffc0"></div>
<div style="left:760px;top:621px;width:1px;height:20px;background:#808080"></div>
<div style="left:776px;top:621px;width:1px;height:20px;background:#808080"></div>
<div style="left:856px;top:621px;width:1px;height:20px;background:#808080"></div>
<div style="left:745px;top:641px;width:159px;height:1px;background:#808080"></div>
<div style="left:904px;top:390px;width:16px;height:16px;background:#f0f0f0;border:1px solid;border-color:#f0f0f0 #000 #000 #f0f0f0;box-shadow:inset 1px 1px #fff,inset -1px -1px #a0a0a0;box-sizing:border-box"></div>
<svg style="position:absolute;left:908px;top:396px" width="7" height="4" shape-rendering="crispEdges"><path d="M3 0h1v1h1v1h1v1h1v1H0V3h1V2h1V1h1z" fill="#000"/></svg>
<div style="left:904px;top:406px;width:16px;height:220px;background:#d8d8d8;border:1px solid;border-color:#f0f0f0 #696969 #696969 #f0f0f0;box-shadow:inset 1px 1px #fff,inset -1px -1px #a0a0a0;box-sizing:border-box"></div>
<div style="left:904px;top:626px;width:16px;height:16px;background:#f0f0f0;border:1px solid;border-color:#f0f0f0 #000 #000 #f0f0f0;box-shadow:inset 1px 1px #fff,inset -1px -1px #a0a0a0;box-sizing:border-box"></div>
<svg style="position:absolute;left:908px;top:632px" width="7" height="4" shape-rendering="crispEdges"><path d="M0 0h7v1H6v1H5v1H4v1H3V3H2V2H1V1H0z" fill="#000"/></svg>
<div style="left:13px;top:644px;width:20px;height:18px;background:#d8d8d8;border-top:1px solid #fff;border-left:1px solid #fff;border-right:1px solid #8a8a8a;border-bottom:1px solid #666;box-shadow:inset 0 -1px #a8a8a8;box-sizing:border-box"></div>
<div class="t" style="left:20px;top:649px;color:#404060;font-size:10px;"><i class="w6">&lt;</i></div>
<div style="left:903px;top:644px;width:20px;height:18px;background:#d8d8d8;border-top:1px solid #fff;border-left:1px solid #fff;border-right:1px solid #8a8a8a;border-bottom:1px solid #666;box-shadow:inset 0 -1px #a8a8a8;box-sizing:border-box"></div>
<div class="t" style="left:910px;top:649px;color:#000030;font-size:10px;"><i class="w6">&gt;</i></div>
<div style="left:928px;top:27px;width:80px;height:639px;border-top:2px solid #707070;border-left:2px solid #707070;border-right:1px solid #fff;border-bottom:1px solid #fff;box-shadow:inset -1px -1px #e8e8e8;box-sizing:border-box"></div>
<div style="left:933px;top:31px;width:73px;height:25px;background:#d8d8d8;border-top:1px solid #fff;border-left:1px solid #fff;border-right:1px solid #8a8a8a;border-bottom:1px solid #666;box-shadow:inset 0 -1px #a8a8a8;box-sizing:border-box"></div>
<div class="t" style="left:950px;top:38px;color:#000030;"><i class="w8">S</i><i class="w7">e</i><i class="w7">a</i><i class="w4">r</i><i class="w6">c</i><u class="w7">h</u></div>
<div style="left:933px;top:464px;width:73px;height:25px;background:#d8d8d8;border-top:1px solid #fff;border-left:1px solid #fff;border-right:1px solid #8a8a8a;border-bottom:1px solid #666;box-shadow:inset 0 -1px #a8a8a8;box-sizing:border-box"></div>
<div class="t" style="left:953px;top:471px;color:#000030;"><u class="w9">G</u><i class="w7">o</i><i class="w3">&nbsp;</i><i class="w7">T</i><i class="w7">o</i></div>
<div style="left:933px;top:489px;width:73px;height:25px;background:#d8d8d8;border-top:1px solid #fff;border-left:1px solid #fff;border-right:1px solid #8a8a8a;border-bottom:1px solid #666;box-shadow:inset 0 -1px #a8a8a8;box-sizing:border-box"></div>
<div class="t" style="left:956px;top:496px;color:#000030;"><u class="w7">L</u><i class="w7">o</i><i class="w6">c</i><i class="w7">k</i></div>
<div style="left:933px;top:514px;width:73px;height:25px;background:#d8d8d8;border-top:1px solid #fff;border-left:1px solid #fff;border-right:1px solid #8a8a8a;border-bottom:1px solid #666;box-shadow:inset 0 -1px #a8a8a8;box-sizing:border-box"></div>
<div class="t" style="left:952px;top:521px;color:#000030;"><i class="w10">M</i><u class="w7">e</u><i class="w4">r</i><i class="w7">g</i><i class="w7">e</i></div>
<div style="left:933px;top:539px;width:73px;height:25px;background:#d8d8d8;border-top:1px solid #fff;border-left:1px solid #fff;border-right:1px solid #8a8a8a;border-bottom:1px solid #666;box-shadow:inset 0 -1px #a8a8a8;box-sizing:border-box"></div>
<div class="t" style="left:953px;top:546px;color:#000030;"><u class="w9">R</u><i class="w7">e</i><i class="w7">s</i><i class="w6">v</i><i class="w3">.</i></div>
<div style="left:933px;top:564px;width:73px;height:25px;background:#d8d8d8;border-top:1px solid #fff;border-left:1px solid #fff;border-right:1px solid #8a8a8a;border-bottom:1px solid #666;box-shadow:inset 0 -1px #a8a8a8;box-sizing:border-box"></div>
<div class="t" style="left:943px;top:571px;color:#000030;"><u class="w8">S</u><i class="w6">c</i><i class="w7">h</i><i class="w7">e</i><i class="w7">d</i><i class="w7">u</i><i class="w3">l</i><i class="w7">e</i></div>
<div style="left:933px;top:589px;width:73px;height:25px;background:#d8d8d8;border-top:1px solid #fff;border-left:1px solid #fff;border-right:1px solid #8a8a8a;border-bottom:1px solid #666;box-shadow:inset 0 -1px #a8a8a8;box-sizing:border-box"></div>
<div class="t" style="left:954px;top:596px;color:#000030;"><u class="w10">M</u><i class="w7">o</i><i class="w6">v</i><i class="w7">e</i></div>
<div style="left:933px;top:614px;width:73px;height:25px;background:#d8d8d8;border-top:1px solid #fff;border-left:1px solid #fff;border-right:1px solid #8a8a8a;border-bottom:1px solid #666;box-shadow:inset 0 -1px #a8a8a8;box-sizing:border-box"></div>
<div class="t" style="left:947px;top:621px;color:#000030;"><i class="w9">C</i><i class="w7">h</i><u class="w7">a</u><i class="w7">n</i><i class="w7">g</i><i class="w7">e</i></div>
<div style="left:933px;top:639px;width:73px;height:25px;background:#d8d8d8;border-top:1px solid #fff;border-left:1px solid #fff;border-right:1px solid #8a8a8a;border-bottom:1px solid #666;box-shadow:inset 0 -1px #a8a8a8;box-sizing:border-box"></div>
<div class="t" style="left:953px;top:646px;color:#000030;"><u class="w9">C</u><i class="w3">l</i><i class="w7">o</i><i class="w7">s</i><i class="w7">e</i></div>
<div class="t" style="left:15px;top:687px;color:#0000f0;font-size:11px;"><i class="w9">G</i><i class="w6">u</i><i class="w6">e</i><i class="w6">s</i><i class="w3">t</i><i class="w3">&nbsp;</i><i class="w7">T</i><i class="w6">u</i><i class="w4">r</i><i class="w6">n</i><i class="w6">d</i><i class="w6">o</i><i class="w8">w</i><i class="w6">n</i></div>
<svg style="position:absolute;left:6px;top:3px" width="20" height="20" shape-rendering="crispEdges"><rect x="4" y="2" width="3" height="1" fill="#b0a8f0"/><rect x="7" y="2" width="5" height="1" fill="#0000ff"/><rect x="3" y="3" width="1" height="1" fill="#b0a8f0"/><rect x="4" y="3" width="2" height="1" fill="#60c080"/><rect x="6" y="3" width="2" height="1" fill="#b0a8f0"/><rect x="8" y="3" width="5" height="1" fill="#0000ff"/><rect x="13" y="3" width="1" height="1" fill="#000080"/><rect x="2" y="4" width="1" height="1" fill="#000"/><rect x="3" y="4" width="3" height="1" fill="#60c080"/><rect x="6" y="4" width="1" height="1" fill="#b0a8f0"/><rect x="7" y="4" width="7" height="1" fill="#0000ff"/><rect x="14" y="4" width="1" height="1" fill="#000080"/><rect x="2" y="5" width="1" height="1" fill="#000"/><rect x="3" y="5" width="2" height="1" fill="#60c080"/><rect x="5" y="5" width="9" height="1" fill="#0000ff"/><rect x="14" y="5" width="1" height="1" fill="#000080"/><rect x="2" y="6" width="1" height="1" fill="#000"/><rect x="3" y="6" width="2" height="1" fill="#60c080"/><rect x="5" y="6" width="13" height="1" fill="#000"/><rect x="2" y="7" width="1" height="1" fill="#000"/><rect x="3" y="7" width="1" height="1" fill="#60c080"/><rect x="4" y="7" width="1" height="1" fill="#000080"/><rect x="5" y="7" width="1" height="1" fill="#000"/><rect x="6" y="7" width="11" height="1" fill="#fff"/><rect x="17" y="7" width="1" height="1" fill="#000"/><rect x="2" y="8" width="1" height="1" fill="#000"/><rect x="3" y="8" width="1" height="1" fill="#60c080"/><rect x="4" y="8" width="1" height="1" fill="#000080"/><rect x="5" y="8" width="1" height="1" fill="#000"/><rect x="6" y="8" width="4" height="1" fill="#fff"/><rect x="10" y="8" width="2" height="1" fill="#000080"/><rect x="12" y="8" width="1" height="1" fill="#fff"/><rect x="13" y="8" width="3" height="1" fill="#0000ff"/><rect x="16" y="8" width="1" height="1" fill="#fff"/><rect x="17" y="8" width="1" height="1" fill="#000"/><rect x="2" y="9" width="1" height="1" fill="#000"/><rect x="3" y="9" width="2" height="1" fill="#000080"/><rect x="5" y="9" width="1" height="1" fill="#000"/><rect x="6" y="9" width="3" height="1" fill="#fff"/><rect x="9" y="9" width="1" height="1" fill="#000080"/><rect x="10" y="9" width="1" height="1" fill="#ffff00"/><rect x="11" y="9" width="1" height="1" fill="#000080"/><rect x="12" y="9" width="1" height="1" fill="#fff"/><rect x="13" y="9" width="3" height="1" fill="#0000ff"/><rect x="16" y="9" width="1" height="1" fill="#fff"/><rect x="17" y="9" width="1" height="1" fill="#000"/><rect x="3" y="10" width="2" height="1" fill="#000080"/><rect x="5" y="10" width="1" height="1" fill="#000"/><rect x="6" y="10" width="2" height="1" fill="#fff"/><rect x="8" y="10" width="1" height="1" fill="#000080"/><rect x="9" y="10" width="2" height="1" fill="#ffff00"/><rect x="11" y="10" width="1" height="1" fill="#000080"/><rect x="12" y="10" width="5" height="1" fill="#fff"/><rect x="17" y="10" width="1" height="1" fill="#000"/><rect x="3" y="11" width="2" height="1" fill="#000080"/><rect x="5" y="11" width="1" height="1" fill="#000"/><rect x="6" y="11" width="1" height="1" fill="#fff"/><rect x="7" y="11" width="1" height="1" fill="#000080"/><rect x="8" y="11" width="2" height="1" fill="#ffff00"/><rect x="10" y="11" width="1" height="1" fill="#000080"/><rect x="11" y="11" width="1" height="1" fill="#fff"/><rect x="12" y="11" width="4" height="1" fill="#ff0000"/><rect x="16" y="11" width="1" height="1" fill="#fff"/><rect x="17" y="11" width="1" height="1" fill="#000"/><rect x="4" y="12" width="1" height="1" fill="#000080"/><rect x="5" y="12" width="1" height="1" fill="#000"/><rect x="6" y="12" width="1" height="1" fill="#000080"/><rect x="7" y="12" width="3" height="1" fill="#ffff00"/><rect x="10" y="12" width="1" height="1" fill="#000080"/><rect x="11" y="12" width="6" height="1" fill="#fff"/><rect x="17" y="12" width="1" height="1" fill="#000"/><rect x="4" y="13" width="1" height="1" fill="#000080"/><rect x="5" y="13" width="1" height="1" fill="#000"/><rect x="6" y="13" width="5" height="1" fill="#ffff00"/><rect x="11" y="13" width="1" height="1" fill="#000080"/><rect x="12" y="13" width="3" height="1" fill="#ff0000"/><rect x="15" y="13" width="2" height="1" fill="#fff"/><rect x="17" y="13" width="1" height="1" fill="#000"/><rect x="5" y="14" width="1" height="1" fill="#000"/><rect x="6" y="14" width="2" height="1" fill="#000080"/><rect x="8" y="14" width="2" height="1" fill="#ffff00"/><rect x="10" y="14" width="1" height="1" fill="#000080"/><rect x="11" y="14" width="3" height="1" fill="#fff"/><rect x="14" y="14" width="3" height="1" fill="#0000ff"/><rect x="17" y="14" width="1" height="1" fill="#000"/><rect x="5" y="15" width="1" height="1" fill="#000"/><rect x="6" y="15" width="1" height="1" fill="#fff"/><rect x="7" y="15" width="1" height="1" fill="#000080"/><rect x="8" y="15" width="1" height="1" fill="#ffff00"/><rect x="9" y="15" width="1" height="1" fill="#000080"/><rect x="10" y="15" width="1" height="1" fill="#fff"/><rect x="11" y="15" width="3" height="1" fill="#ff0000"/><rect x="14" y="15" width="3" height="1" fill="#0000ff"/><rect x="17" y="15" width="1" height="1" fill="#000"/><rect x="5" y="16" width="1" height="1" fill="#000"/><rect x="6" y="16" width="1" height="1" fill="#fff"/><rect x="7" y="16" width="1" height="1" fill="#ffff00"/><rect x="8" y="16" width="1" height="1" fill="#000080"/><rect x="9" y="16" width="5" height="1" fill="#fff"/><rect x="14" y="16" width="2" height="1" fill="#0000ff"/><rect x="16" y="16" width="1" height="1" fill="#fff"/><rect x="17" y="16" width="1" height="1" fill="#000"/><rect x="5" y="17" width="13" height="1" fill="#000"/></svg>
</body></html>
